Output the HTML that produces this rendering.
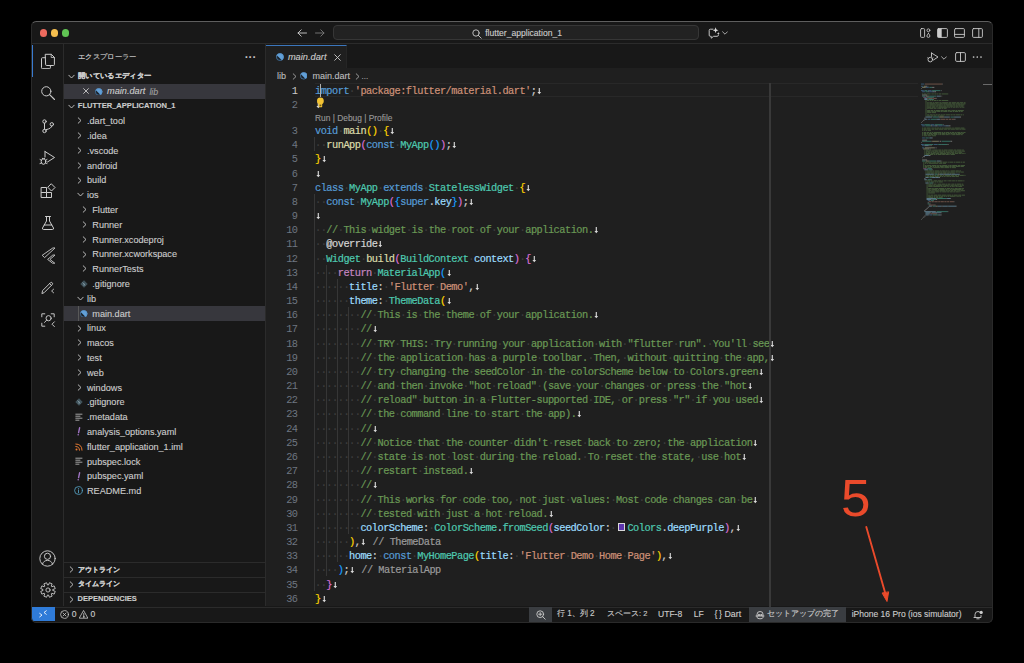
<!DOCTYPE html><html><head><meta charset="utf-8"><style>
*{margin:0;padding:0;box-sizing:border-box}
html,body{width:1024px;height:663px;background:#000;overflow:hidden}
body{position:relative;font-family:"Liberation Sans",sans-serif;color:#cccccc}
#win{position:absolute;left:31px;top:21px;width:961.5px;height:601px;background:#181818;border-radius:5px;overflow:hidden}
#winb{position:absolute;left:30.5px;top:20.5px;width:962.5px;height:602px;border-radius:5.5px;border:1px solid #2a2a2a;border-top-color:#5e5e5e;pointer-events:none;z-index:5}
.a{position:absolute}
.cl{position:absolute;left:284.0px;height:14.17px;line-height:14.17px;font-family:"Liberation Mono",monospace;font-size:10.3px;letter-spacing:-0.5009px;white-space:pre;margin-top:1.1px;-webkit-text-stroke:0.2px}
.cl i{font-style:normal}
.d{color:#3e3e3e}
.eol{display:inline-block;width:5.680px;height:14.17px;vertical-align:top}
.sw{display:inline-block;width:11.36px;height:14.17px;position:relative;vertical-align:top}
.sw:after{content:"";position:absolute;left:1.8px;top:2.1px;width:7.6px;height:7.6px;box-sizing:border-box;background:#5d35b0;border:0.8px solid #d8d8d8}
.ln{position:absolute;left:235px;width:31.5px;text-align:right;height:14.17px;line-height:14.17px;font-family:"Liberation Mono",monospace;font-size:10.3px;letter-spacing:-0.5009px;color:#6e7681;margin-top:1.1px}
.ln.cur{color:#cccccc}
.ig{position:absolute;width:1px;background:#363636}
.ui{position:absolute;font-size:9px;white-space:nowrap;line-height:14px;-webkit-text-stroke:0.12px}
</style></head><body>
<div id="win">
<div class="a" style="left:0;top:0;width:962px;height:23.3px;background:#181818;border-bottom:1px solid #2b2b2b"></div>
<div class="a" style="left:8.8px;top:8.4px;width:7.2px;height:7.2px;border-radius:50%;background:#ed6a5e"></div>
<div class="a" style="left:19.95px;top:8.4px;width:7.2px;height:7.2px;border-radius:50%;background:#f5bf4f"></div>
<div class="a" style="left:31.1px;top:8.4px;width:7.2px;height:7.2px;border-radius:50%;background:#61c554"></div>
<div class="a" style="left:235px;top:23.3px;width:727px;height:562.2px;background:#1f1f1f"></div>
<div class="a" style="left:235px;top:23.3px;width:727px;height:23.5px;background:#181818"></div>
<div class="a" style="left:235px;top:24px;width:81px;height:22.799999999999997px;background:#1f1f1f;border-top:1px solid #3b76bd;border-right:1px solid #252525"></div>
<div class="a" style="left:32.3px;top:23.3px;width:1px;height:562.2px;background:#2b2b2b"></div>
<div class="a" style="left:234.3px;top:23.3px;width:1px;height:562.2px;background:#2b2b2b"></div>
<div class="a" style="left:0;top:585.5px;width:962px;height:15.5px;background:#181818;border-top:1px solid #2b2b2b"></div>
<div class="ig" style="left:283.40px;top:116.17px;height:14.17px"></div><div class="ig" style="left:283.40px;top:172.85px;height:396.76px"></div><div class="ig" style="left:294.76px;top:243.70px;height:311.74px"></div><div class="ig" style="left:306.12px;top:257.87px;height:283.40px"></div><div class="ig" style="left:317.48px;top:286.21px;height:226.72px"></div>
<div class="cl" style="top:61.60px"><span style="color:#569cd6">import</span><i class="d">·</i><span style="color:#ce9178">&#x27;package:flutter/material.dart&#x27;</span><span style="color:#cccccc">;</span><svg class="eol" width="5.680" height="14.17" viewBox="0 0 5.680 14.17"><path d="M3.3 4.0 V8.6" stroke="#d8d8d8" stroke-width="1.15"/><path d="M1.45 7.9 H5.15 L3.3 10.3 Z" fill="#d8d8d8"/></svg></div><div class="ln cur" style="top:61.60px">1</div><div class="cl" style="top:75.90px"><svg class="eol" width="5.680" height="14.17" viewBox="0 0 5.680 14.17"><path d="M3.3 4.0 V8.6" stroke="#d8d8d8" stroke-width="1.15"/><path d="M1.45 7.9 H5.15 L3.3 10.3 Z" fill="#d8d8d8"/></svg></div><div class="ln" style="top:75.90px">2</div><div class="cl" style="top:102.00px"><span style="color:#569cd6">void</span><i class="d">·</i><span style="color:#dcdcaa">main</span><span style="color:#ffd700">()</span><i class="d">·</i><span style="color:#ffd700">{</span><svg class="eol" width="5.680" height="14.17" viewBox="0 0 5.680 14.17"><path d="M3.3 4.0 V8.6" stroke="#d8d8d8" stroke-width="1.15"/><path d="M1.45 7.9 H5.15 L3.3 10.3 Z" fill="#d8d8d8"/></svg></div><div class="ln" style="top:102.00px">3</div><div class="cl" style="top:116.17px"><i class="d">··</i><span style="color:#dcdcaa">runApp</span><span style="color:#da70d6">(</span><span style="color:#569cd6">const</span><i class="d">·</i><span style="color:#4ec9b0">MyApp</span><span style="color:#179fff">()</span><span style="color:#da70d6">)</span><span style="color:#cccccc">;</span><svg class="eol" width="5.680" height="14.17" viewBox="0 0 5.680 14.17"><path d="M3.3 4.0 V8.6" stroke="#d8d8d8" stroke-width="1.15"/><path d="M1.45 7.9 H5.15 L3.3 10.3 Z" fill="#d8d8d8"/></svg></div><div class="ln" style="top:116.17px">4</div><div class="cl" style="top:130.34px"><span style="color:#ffd700">}</span><svg class="eol" width="5.680" height="14.17" viewBox="0 0 5.680 14.17"><path d="M3.3 4.0 V8.6" stroke="#d8d8d8" stroke-width="1.15"/><path d="M1.45 7.9 H5.15 L3.3 10.3 Z" fill="#d8d8d8"/></svg></div><div class="ln" style="top:130.34px">5</div><div class="cl" style="top:144.51px"><svg class="eol" width="5.680" height="14.17" viewBox="0 0 5.680 14.17"><path d="M3.3 4.0 V8.6" stroke="#d8d8d8" stroke-width="1.15"/><path d="M1.45 7.9 H5.15 L3.3 10.3 Z" fill="#d8d8d8"/></svg></div><div class="ln" style="top:144.51px">6</div><div class="cl" style="top:158.68px"><span style="color:#569cd6">class</span><i class="d">·</i><span style="color:#4ec9b0">MyApp</span><i class="d">·</i><span style="color:#569cd6">extends</span><i class="d">·</i><span style="color:#4ec9b0">StatelessWidget</span><i class="d">·</i><span style="color:#ffd700">{</span><svg class="eol" width="5.680" height="14.17" viewBox="0 0 5.680 14.17"><path d="M3.3 4.0 V8.6" stroke="#d8d8d8" stroke-width="1.15"/><path d="M1.45 7.9 H5.15 L3.3 10.3 Z" fill="#d8d8d8"/></svg></div><div class="ln" style="top:158.68px">7</div><div class="cl" style="top:172.85px"><i class="d">··</i><span style="color:#569cd6">const</span><i class="d">·</i><span style="color:#4ec9b0">MyApp</span><span style="color:#da70d6">(</span><span style="color:#179fff">{</span><span style="color:#569cd6">super</span><span style="color:#cccccc">.</span><span style="color:#9cdcfe">key</span><span style="color:#179fff">}</span><span style="color:#da70d6">)</span><span style="color:#cccccc">;</span><svg class="eol" width="5.680" height="14.17" viewBox="0 0 5.680 14.17"><path d="M3.3 4.0 V8.6" stroke="#d8d8d8" stroke-width="1.15"/><path d="M1.45 7.9 H5.15 L3.3 10.3 Z" fill="#d8d8d8"/></svg></div><div class="ln" style="top:172.85px">8</div><div class="cl" style="top:187.02px"><svg class="eol" width="5.680" height="14.17" viewBox="0 0 5.680 14.17"><path d="M3.3 4.0 V8.6" stroke="#d8d8d8" stroke-width="1.15"/><path d="M1.45 7.9 H5.15 L3.3 10.3 Z" fill="#d8d8d8"/></svg></div><div class="ln" style="top:187.02px">9</div><div class="cl" style="top:201.19px"><i class="d">··</i><span style="color:#6a9955">//</span><i class="d">·</i><span style="color:#6a9955">This</span><i class="d">·</i><span style="color:#6a9955">widget</span><i class="d">·</i><span style="color:#6a9955">is</span><i class="d">·</i><span style="color:#6a9955">the</span><i class="d">·</i><span style="color:#6a9955">root</span><i class="d">·</i><span style="color:#6a9955">of</span><i class="d">·</i><span style="color:#6a9955">your</span><i class="d">·</i><span style="color:#6a9955">application.</span><svg class="eol" width="5.680" height="14.17" viewBox="0 0 5.680 14.17"><path d="M3.3 4.0 V8.6" stroke="#d8d8d8" stroke-width="1.15"/><path d="M1.45 7.9 H5.15 L3.3 10.3 Z" fill="#d8d8d8"/></svg></div><div class="ln" style="top:201.19px">10</div><div class="cl" style="top:215.36px"><i class="d">··</i><span style="color:#d4d4d4">@override</span><svg class="eol" width="5.680" height="14.17" viewBox="0 0 5.680 14.17"><path d="M3.3 4.0 V8.6" stroke="#d8d8d8" stroke-width="1.15"/><path d="M1.45 7.9 H5.15 L3.3 10.3 Z" fill="#d8d8d8"/></svg></div><div class="ln" style="top:215.36px">11</div><div class="cl" style="top:229.53px"><i class="d">··</i><span style="color:#4ec9b0">Widget</span><i class="d">·</i><span style="color:#dcdcaa">build</span><span style="color:#da70d6">(</span><span style="color:#4ec9b0">BuildContext</span><i class="d">·</i><span style="color:#9cdcfe">context</span><span style="color:#da70d6">)</span><i class="d">·</i><span style="color:#da70d6">{</span><svg class="eol" width="5.680" height="14.17" viewBox="0 0 5.680 14.17"><path d="M3.3 4.0 V8.6" stroke="#d8d8d8" stroke-width="1.15"/><path d="M1.45 7.9 H5.15 L3.3 10.3 Z" fill="#d8d8d8"/></svg></div><div class="ln" style="top:229.53px">12</div><div class="cl" style="top:243.70px"><i class="d">····</i><span style="color:#c586c0">return</span><i class="d">·</i><span style="color:#4ec9b0">MaterialApp</span><span style="color:#179fff">(</span><svg class="eol" width="5.680" height="14.17" viewBox="0 0 5.680 14.17"><path d="M3.3 4.0 V8.6" stroke="#d8d8d8" stroke-width="1.15"/><path d="M1.45 7.9 H5.15 L3.3 10.3 Z" fill="#d8d8d8"/></svg></div><div class="ln" style="top:243.70px">13</div><div class="cl" style="top:257.87px"><i class="d">······</i><span style="color:#9cdcfe">title</span><span style="color:#cccccc">:</span><i class="d">·</i><span style="color:#ce9178">&#x27;Flutter</span><i class="d">·</i><span style="color:#ce9178">Demo&#x27;</span><span style="color:#cccccc">,</span><svg class="eol" width="5.680" height="14.17" viewBox="0 0 5.680 14.17"><path d="M3.3 4.0 V8.6" stroke="#d8d8d8" stroke-width="1.15"/><path d="M1.45 7.9 H5.15 L3.3 10.3 Z" fill="#d8d8d8"/></svg></div><div class="ln" style="top:257.87px">14</div><div class="cl" style="top:272.04px"><i class="d">······</i><span style="color:#9cdcfe">theme</span><span style="color:#cccccc">:</span><i class="d">·</i><span style="color:#4ec9b0">ThemeData</span><span style="color:#ffd700">(</span><svg class="eol" width="5.680" height="14.17" viewBox="0 0 5.680 14.17"><path d="M3.3 4.0 V8.6" stroke="#d8d8d8" stroke-width="1.15"/><path d="M1.45 7.9 H5.15 L3.3 10.3 Z" fill="#d8d8d8"/></svg></div><div class="ln" style="top:272.04px">15</div><div class="cl" style="top:286.21px"><i class="d">········</i><span style="color:#6a9955">//</span><i class="d">·</i><span style="color:#6a9955">This</span><i class="d">·</i><span style="color:#6a9955">is</span><i class="d">·</i><span style="color:#6a9955">the</span><i class="d">·</i><span style="color:#6a9955">theme</span><i class="d">·</i><span style="color:#6a9955">of</span><i class="d">·</i><span style="color:#6a9955">your</span><i class="d">·</i><span style="color:#6a9955">application.</span><svg class="eol" width="5.680" height="14.17" viewBox="0 0 5.680 14.17"><path d="M3.3 4.0 V8.6" stroke="#d8d8d8" stroke-width="1.15"/><path d="M1.45 7.9 H5.15 L3.3 10.3 Z" fill="#d8d8d8"/></svg></div><div class="ln" style="top:286.21px">16</div><div class="cl" style="top:300.38px"><i class="d">········</i><span style="color:#6a9955">//</span><svg class="eol" width="5.680" height="14.17" viewBox="0 0 5.680 14.17"><path d="M3.3 4.0 V8.6" stroke="#d8d8d8" stroke-width="1.15"/><path d="M1.45 7.9 H5.15 L3.3 10.3 Z" fill="#d8d8d8"/></svg></div><div class="ln" style="top:300.38px">17</div><div class="cl" style="top:314.55px"><i class="d">········</i><span style="color:#6a9955">//</span><i class="d">·</i><span style="color:#6a9955">TRY</span><i class="d">·</i><span style="color:#6a9955">THIS:</span><i class="d">·</i><span style="color:#6a9955">Try</span><i class="d">·</i><span style="color:#6a9955">running</span><i class="d">·</i><span style="color:#6a9955">your</span><i class="d">·</i><span style="color:#6a9955">application</span><i class="d">·</i><span style="color:#6a9955">with</span><i class="d">·</i><span style="color:#6a9955">&quot;flutter</span><i class="d">·</i><span style="color:#6a9955">run&quot;.</span><i class="d">·</i><span style="color:#6a9955">You&#x27;ll</span><i class="d">·</i><span style="color:#6a9955">see</span><svg class="eol" width="5.680" height="14.17" viewBox="0 0 5.680 14.17"><path d="M3.3 4.0 V8.6" stroke="#d8d8d8" stroke-width="1.15"/><path d="M1.45 7.9 H5.15 L3.3 10.3 Z" fill="#d8d8d8"/></svg></div><div class="ln" style="top:314.55px">18</div><div class="cl" style="top:328.72px"><i class="d">········</i><span style="color:#6a9955">//</span><i class="d">·</i><span style="color:#6a9955">the</span><i class="d">·</i><span style="color:#6a9955">application</span><i class="d">·</i><span style="color:#6a9955">has</span><i class="d">·</i><span style="color:#6a9955">a</span><i class="d">·</i><span style="color:#6a9955">purple</span><i class="d">·</i><span style="color:#6a9955">toolbar.</span><i class="d">·</i><span style="color:#6a9955">Then,</span><i class="d">·</i><span style="color:#6a9955">without</span><i class="d">·</i><span style="color:#6a9955">quitting</span><i class="d">·</i><span style="color:#6a9955">the</span><i class="d">·</i><span style="color:#6a9955">app,</span><svg class="eol" width="5.680" height="14.17" viewBox="0 0 5.680 14.17"><path d="M3.3 4.0 V8.6" stroke="#d8d8d8" stroke-width="1.15"/><path d="M1.45 7.9 H5.15 L3.3 10.3 Z" fill="#d8d8d8"/></svg></div><div class="ln" style="top:328.72px">19</div><div class="cl" style="top:342.89px"><i class="d">········</i><span style="color:#6a9955">//</span><i class="d">·</i><span style="color:#6a9955">try</span><i class="d">·</i><span style="color:#6a9955">changing</span><i class="d">·</i><span style="color:#6a9955">the</span><i class="d">·</i><span style="color:#6a9955">seedColor</span><i class="d">·</i><span style="color:#6a9955">in</span><i class="d">·</i><span style="color:#6a9955">the</span><i class="d">·</i><span style="color:#6a9955">colorScheme</span><i class="d">·</i><span style="color:#6a9955">below</span><i class="d">·</i><span style="color:#6a9955">to</span><i class="d">·</i><span style="color:#6a9955">Colors.green</span><svg class="eol" width="5.680" height="14.17" viewBox="0 0 5.680 14.17"><path d="M3.3 4.0 V8.6" stroke="#d8d8d8" stroke-width="1.15"/><path d="M1.45 7.9 H5.15 L3.3 10.3 Z" fill="#d8d8d8"/></svg></div><div class="ln" style="top:342.89px">20</div><div class="cl" style="top:357.06px"><i class="d">········</i><span style="color:#6a9955">//</span><i class="d">·</i><span style="color:#6a9955">and</span><i class="d">·</i><span style="color:#6a9955">then</span><i class="d">·</i><span style="color:#6a9955">invoke</span><i class="d">·</i><span style="color:#6a9955">&quot;hot</span><i class="d">·</i><span style="color:#6a9955">reload&quot;</span><i class="d">·</i><span style="color:#6a9955">(save</span><i class="d">·</i><span style="color:#6a9955">your</span><i class="d">·</i><span style="color:#6a9955">changes</span><i class="d">·</i><span style="color:#6a9955">or</span><i class="d">·</i><span style="color:#6a9955">press</span><i class="d">·</i><span style="color:#6a9955">the</span><i class="d">·</i><span style="color:#6a9955">&quot;hot</span><svg class="eol" width="5.680" height="14.17" viewBox="0 0 5.680 14.17"><path d="M3.3 4.0 V8.6" stroke="#d8d8d8" stroke-width="1.15"/><path d="M1.45 7.9 H5.15 L3.3 10.3 Z" fill="#d8d8d8"/></svg></div><div class="ln" style="top:357.06px">21</div><div class="cl" style="top:371.23px"><i class="d">········</i><span style="color:#6a9955">//</span><i class="d">·</i><span style="color:#6a9955">reload&quot;</span><i class="d">·</i><span style="color:#6a9955">button</span><i class="d">·</i><span style="color:#6a9955">in</span><i class="d">·</i><span style="color:#6a9955">a</span><i class="d">·</i><span style="color:#6a9955">Flutter-supported</span><i class="d">·</i><span style="color:#6a9955">IDE,</span><i class="d">·</i><span style="color:#6a9955">or</span><i class="d">·</i><span style="color:#6a9955">press</span><i class="d">·</i><span style="color:#6a9955">&quot;r&quot;</span><i class="d">·</i><span style="color:#6a9955">if</span><i class="d">·</i><span style="color:#6a9955">you</span><i class="d">·</i><span style="color:#6a9955">used</span><svg class="eol" width="5.680" height="14.17" viewBox="0 0 5.680 14.17"><path d="M3.3 4.0 V8.6" stroke="#d8d8d8" stroke-width="1.15"/><path d="M1.45 7.9 H5.15 L3.3 10.3 Z" fill="#d8d8d8"/></svg></div><div class="ln" style="top:371.23px">22</div><div class="cl" style="top:385.40px"><i class="d">········</i><span style="color:#6a9955">//</span><i class="d">·</i><span style="color:#6a9955">the</span><i class="d">·</i><span style="color:#6a9955">command</span><i class="d">·</i><span style="color:#6a9955">line</span><i class="d">·</i><span style="color:#6a9955">to</span><i class="d">·</i><span style="color:#6a9955">start</span><i class="d">·</i><span style="color:#6a9955">the</span><i class="d">·</i><span style="color:#6a9955">app).</span><svg class="eol" width="5.680" height="14.17" viewBox="0 0 5.680 14.17"><path d="M3.3 4.0 V8.6" stroke="#d8d8d8" stroke-width="1.15"/><path d="M1.45 7.9 H5.15 L3.3 10.3 Z" fill="#d8d8d8"/></svg></div><div class="ln" style="top:385.40px">23</div><div class="cl" style="top:399.57px"><i class="d">········</i><span style="color:#6a9955">//</span><svg class="eol" width="5.680" height="14.17" viewBox="0 0 5.680 14.17"><path d="M3.3 4.0 V8.6" stroke="#d8d8d8" stroke-width="1.15"/><path d="M1.45 7.9 H5.15 L3.3 10.3 Z" fill="#d8d8d8"/></svg></div><div class="ln" style="top:399.57px">24</div><div class="cl" style="top:413.74px"><i class="d">········</i><span style="color:#6a9955">//</span><i class="d">·</i><span style="color:#6a9955">Notice</span><i class="d">·</i><span style="color:#6a9955">that</span><i class="d">·</i><span style="color:#6a9955">the</span><i class="d">·</i><span style="color:#6a9955">counter</span><i class="d">·</i><span style="color:#6a9955">didn&#x27;t</span><i class="d">·</i><span style="color:#6a9955">reset</span><i class="d">·</i><span style="color:#6a9955">back</span><i class="d">·</i><span style="color:#6a9955">to</span><i class="d">·</i><span style="color:#6a9955">zero;</span><i class="d">·</i><span style="color:#6a9955">the</span><i class="d">·</i><span style="color:#6a9955">application</span><svg class="eol" width="5.680" height="14.17" viewBox="0 0 5.680 14.17"><path d="M3.3 4.0 V8.6" stroke="#d8d8d8" stroke-width="1.15"/><path d="M1.45 7.9 H5.15 L3.3 10.3 Z" fill="#d8d8d8"/></svg></div><div class="ln" style="top:413.74px">25</div><div class="cl" style="top:427.91px"><i class="d">········</i><span style="color:#6a9955">//</span><i class="d">·</i><span style="color:#6a9955">state</span><i class="d">·</i><span style="color:#6a9955">is</span><i class="d">·</i><span style="color:#6a9955">not</span><i class="d">·</i><span style="color:#6a9955">lost</span><i class="d">·</i><span style="color:#6a9955">during</span><i class="d">·</i><span style="color:#6a9955">the</span><i class="d">·</i><span style="color:#6a9955">reload.</span><i class="d">·</i><span style="color:#6a9955">To</span><i class="d">·</i><span style="color:#6a9955">reset</span><i class="d">·</i><span style="color:#6a9955">the</span><i class="d">·</i><span style="color:#6a9955">state,</span><i class="d">·</i><span style="color:#6a9955">use</span><i class="d">·</i><span style="color:#6a9955">hot</span><svg class="eol" width="5.680" height="14.17" viewBox="0 0 5.680 14.17"><path d="M3.3 4.0 V8.6" stroke="#d8d8d8" stroke-width="1.15"/><path d="M1.45 7.9 H5.15 L3.3 10.3 Z" fill="#d8d8d8"/></svg></div><div class="ln" style="top:427.91px">26</div><div class="cl" style="top:442.08px"><i class="d">········</i><span style="color:#6a9955">//</span><i class="d">·</i><span style="color:#6a9955">restart</span><i class="d">·</i><span style="color:#6a9955">instead.</span><svg class="eol" width="5.680" height="14.17" viewBox="0 0 5.680 14.17"><path d="M3.3 4.0 V8.6" stroke="#d8d8d8" stroke-width="1.15"/><path d="M1.45 7.9 H5.15 L3.3 10.3 Z" fill="#d8d8d8"/></svg></div><div class="ln" style="top:442.08px">27</div><div class="cl" style="top:456.25px"><i class="d">········</i><span style="color:#6a9955">//</span><svg class="eol" width="5.680" height="14.17" viewBox="0 0 5.680 14.17"><path d="M3.3 4.0 V8.6" stroke="#d8d8d8" stroke-width="1.15"/><path d="M1.45 7.9 H5.15 L3.3 10.3 Z" fill="#d8d8d8"/></svg></div><div class="ln" style="top:456.25px">28</div><div class="cl" style="top:470.42px"><i class="d">········</i><span style="color:#6a9955">//</span><i class="d">·</i><span style="color:#6a9955">This</span><i class="d">·</i><span style="color:#6a9955">works</span><i class="d">·</i><span style="color:#6a9955">for</span><i class="d">·</i><span style="color:#6a9955">code</span><i class="d">·</i><span style="color:#6a9955">too,</span><i class="d">·</i><span style="color:#6a9955">not</span><i class="d">·</i><span style="color:#6a9955">just</span><i class="d">·</i><span style="color:#6a9955">values:</span><i class="d">·</i><span style="color:#6a9955">Most</span><i class="d">·</i><span style="color:#6a9955">code</span><i class="d">·</i><span style="color:#6a9955">changes</span><i class="d">·</i><span style="color:#6a9955">can</span><i class="d">·</i><span style="color:#6a9955">be</span><svg class="eol" width="5.680" height="14.17" viewBox="0 0 5.680 14.17"><path d="M3.3 4.0 V8.6" stroke="#d8d8d8" stroke-width="1.15"/><path d="M1.45 7.9 H5.15 L3.3 10.3 Z" fill="#d8d8d8"/></svg></div><div class="ln" style="top:470.42px">29</div><div class="cl" style="top:484.59px"><i class="d">········</i><span style="color:#6a9955">//</span><i class="d">·</i><span style="color:#6a9955">tested</span><i class="d">·</i><span style="color:#6a9955">with</span><i class="d">·</i><span style="color:#6a9955">just</span><i class="d">·</i><span style="color:#6a9955">a</span><i class="d">·</i><span style="color:#6a9955">hot</span><i class="d">·</i><span style="color:#6a9955">reload.</span><svg class="eol" width="5.680" height="14.17" viewBox="0 0 5.680 14.17"><path d="M3.3 4.0 V8.6" stroke="#d8d8d8" stroke-width="1.15"/><path d="M1.45 7.9 H5.15 L3.3 10.3 Z" fill="#d8d8d8"/></svg></div><div class="ln" style="top:484.59px">30</div><div class="cl" style="top:498.76px"><i class="d">········</i><span style="color:#9cdcfe">colorScheme</span><span style="color:#cccccc">:</span><i class="d">·</i><span style="color:#4ec9b0">ColorScheme</span><span style="color:#cccccc">.</span><span style="color:#4ec9b0">fromSeed</span><span style="color:#da70d6">(</span><span style="color:#9cdcfe">seedColor</span><span style="color:#cccccc">:</span><i class="d">·</i><b class="sw"></b><span style="color:#4ec9b0">Colors</span><span style="color:#cccccc">.</span><span style="color:#9cdcfe">deepPurple</span><span style="color:#da70d6">)</span><span style="color:#cccccc">,</span><svg class="eol" width="5.680" height="14.17" viewBox="0 0 5.680 14.17"><path d="M3.3 4.0 V8.6" stroke="#d8d8d8" stroke-width="1.15"/><path d="M1.45 7.9 H5.15 L3.3 10.3 Z" fill="#d8d8d8"/></svg></div><div class="ln" style="top:498.76px">31</div><div class="cl" style="top:512.93px"><i class="d">······</i><span style="color:#ffd700">)</span><span style="color:#cccccc">,</span><svg class="eol" width="5.680" height="14.17" viewBox="0 0 5.680 14.17"><path d="M3.3 4.0 V8.6" stroke="#d8d8d8" stroke-width="1.15"/><path d="M1.45 7.9 H5.15 L3.3 10.3 Z" fill="#d8d8d8"/></svg><span style="color:#9a9a9a;margin-left:0.8px"> // ThemeData</span></div><div class="ln" style="top:512.93px">32</div><div class="cl" style="top:527.10px"><i class="d">······</i><span style="color:#9cdcfe">home</span><span style="color:#cccccc">:</span><i class="d">·</i><span style="color:#569cd6">const</span><i class="d">·</i><span style="color:#4ec9b0">MyHomePage</span><span style="color:#ffd700">(</span><span style="color:#9cdcfe">title</span><span style="color:#cccccc">:</span><i class="d">·</i><span style="color:#ce9178">&#x27;Flutter</span><i class="d">·</i><span style="color:#ce9178">Demo</span><i class="d">·</i><span style="color:#ce9178">Home</span><i class="d">·</i><span style="color:#ce9178">Page&#x27;</span><span style="color:#ffd700">)</span><span style="color:#cccccc">,</span><svg class="eol" width="5.680" height="14.17" viewBox="0 0 5.680 14.17"><path d="M3.3 4.0 V8.6" stroke="#d8d8d8" stroke-width="1.15"/><path d="M1.45 7.9 H5.15 L3.3 10.3 Z" fill="#d8d8d8"/></svg></div><div class="ln" style="top:527.10px">33</div><div class="cl" style="top:541.27px"><i class="d">····</i><span style="color:#179fff">)</span><span style="color:#cccccc">;</span><svg class="eol" width="5.680" height="14.17" viewBox="0 0 5.680 14.17"><path d="M3.3 4.0 V8.6" stroke="#d8d8d8" stroke-width="1.15"/><path d="M1.45 7.9 H5.15 L3.3 10.3 Z" fill="#d8d8d8"/></svg><span style="color:#9a9a9a;margin-left:0.8px"> // MaterialApp</span></div><div class="ln" style="top:541.27px">34</div><div class="cl" style="top:555.44px"><i class="d">··</i><span style="color:#da70d6">}</span><svg class="eol" width="5.680" height="14.17" viewBox="0 0 5.680 14.17"><path d="M3.3 4.0 V8.6" stroke="#d8d8d8" stroke-width="1.15"/><path d="M1.45 7.9 H5.15 L3.3 10.3 Z" fill="#d8d8d8"/></svg></div><div class="ln" style="top:555.44px">35</div><div class="cl" style="top:569.61px"><span style="color:#ffd700">}</span><svg class="eol" width="5.680" height="14.17" viewBox="0 0 5.680 14.17"><path d="M3.3 4.0 V8.6" stroke="#d8d8d8" stroke-width="1.15"/><path d="M1.45 7.9 H5.15 L3.3 10.3 Z" fill="#d8d8d8"/></svg></div><div class="ln" style="top:569.61px">36</div>
<div class="a" style="left:0;top:24px;width:1.8px;height:32px;background:#3a7bd0"></div>
<svg class="a" style="left:8.50px;top:32.00px;" width="16" height="16" viewBox="0 0 16 16" fill="none" stroke="#cccccc" stroke-width="1" stroke-linecap="round" stroke-linejoin="round"><path d="M5.6 1.3 H11.3 L14.4 4.4 V11.6 Q14.4 12.5 13.5 12.5 H6.5 Q5.6 12.5 5.6 11.6 Z" stroke-width="1"/><path d="M11.2 1.3 V4.5 H14.4" stroke-width="0.8"/><path d="M5.6 4.7 H2.5 Q1.5 4.7 1.5 5.7 V14.7 Q1.5 15.7 2.5 15.7 H9.4 Q10.4 15.7 10.4 14.7 V12.5" stroke-width="1"/></svg>
<svg class="a" style="left:8.50px;top:63.50px;" width="16" height="16" viewBox="0 0 16 16" fill="none" stroke="#cccccc" stroke-width="1" stroke-linecap="round" stroke-linejoin="round"><circle cx="6.3" cy="6.3" r="4.6"/><path d="M9.6 9.6 L14.5 14.5" stroke-width="1.1"/></svg>
<svg class="a" style="left:8.50px;top:97.00px;" width="16" height="16" viewBox="0 0 16 16" fill="none" stroke="#cccccc" stroke-width="1" stroke-linecap="round" stroke-linejoin="round"><circle cx="4.5" cy="3.5" r="1.7"/><circle cx="4.5" cy="13" r="1.7"/><circle cx="11.8" cy="6.3" r="1.7"/><path d="M4.5 5.2 V11.3"/><path d="M11.8 8 Q11.8 10.5 6 11.7"/></svg>
<svg class="a" style="left:8.00px;top:128.60px;" width="17" height="16" viewBox="0 0 17 16" fill="none" stroke="#cccccc" stroke-width="1" stroke-linecap="round" stroke-linejoin="round"><path d="M6 1.5 L15.5 7.5 L8.5 12" /><path d="M6 1.5 V7"/><ellipse cx="4.5" cy="11.5" rx="2.3" ry="2.8"/><path d="M1 9.5 L2.3 10.3 M1 13.5 L2.3 13 M8 9.5 L6.7 10.3 M8 13.5 L6.7 13 M3.3 8.3 L4.5 9 L5.7 8.3"/></svg>
<svg class="a" style="left:8.50px;top:161.50px;" width="16" height="16" viewBox="0 0 16 16" fill="none" stroke="#cccccc" stroke-width="1" stroke-linecap="round" stroke-linejoin="round"><path d="M1.5 4.5 H6.5 V9.5 H11.5 V14.5 H1.5 Z M1.5 9.5 H6.5 V14.5"/><path d="M11.5 1 L15 4.5 L11.5 8 L8 4.5 Z"/></svg>
<svg class="a" style="left:9.50px;top:193.70px;" width="14" height="16" viewBox="0 0 14 16" fill="none" stroke="#cccccc" stroke-width="1" stroke-linecap="round" stroke-linejoin="round"><path d="M4.5 1.5 H9.5 M5.5 1.5 V6 L1.5 13 Q1.2 14.5 2.5 14.5 H11.5 Q12.8 14.5 12.5 13 L8.5 6 V1.5"/><path d="M3.2 10 H10.8"/></svg>
<svg class="a" style="left:9.50px;top:225.90px;" width="14" height="17" viewBox="0 0 14 17" fill="none" stroke="#cccccc" stroke-width="1" stroke-linecap="round" stroke-linejoin="round"><path d="M11.5 1.2 L1.2 8.3 L3.6 10.6 L13.8 1.2 Z" stroke-width="0.9"/><path d="M11.5 8.3 L6.6 12.4 L11.5 16.2 H13.8 L8.9 12.4 L13.8 8.3 Z" stroke-width="0.9"/></svg>
<svg class="a" style="left:9.00px;top:258.50px;" width="15" height="15" viewBox="0 0 15 15" fill="none" stroke="#cccccc" stroke-width="1" stroke-linecap="round" stroke-linejoin="round"><path d="M2 13.2 L2.6 10.6 L10.4 2.8 Q11.3 1.9 12.2 2.8 Q13.1 3.7 12.2 4.6 L4.4 12.4 Z" stroke-width="0.95"/><path d="M9.6 3.6 L11.4 5.4" stroke-width="0.9"/><path d="M13.6 9.2 L11.6 11 L13.6 12.8" stroke-width="0.9"/></svg>
<svg class="a" style="left:8.50px;top:291.00px;" width="16" height="16" viewBox="0 0 16 16" fill="none" stroke="#cccccc" stroke-width="1" stroke-linecap="round" stroke-linejoin="round"><path d="M1.8 4.8 V1.8 H4.8 M11.2 1.8 H14.2 V4.8 M1.8 11.2 V14.2 H4.8" stroke-width="0.95"/><circle cx="8.6" cy="6.2" r="2.6" stroke-width="0.95"/><path d="M6.7 8.1 L4.6 10.4" stroke-width="0.95"/><path d="M14.4 9.8 L12 12.2 L14.4 14.6" stroke-width="0.95"/></svg>
<svg class="a" style="left:8.00px;top:528.70px;" width="17" height="17" viewBox="0 0 17 17" fill="none" stroke="#cccccc" stroke-width="1" stroke-linecap="round" stroke-linejoin="round"><circle cx="8.5" cy="8.5" r="7.7" stroke-width="0.95"/><circle cx="8.5" cy="6.3" r="3.1" stroke-width="0.95"/><path d="M3.4 14.2 Q4.6 10.4 8.5 10.4 Q12.4 10.4 13.6 14.2" stroke-width="0.95"/></svg>
<svg class="a" style="left:8.50px;top:561.20px;" width="16" height="16" viewBox="0 0 16 16" fill="none" stroke="#cccccc" stroke-width="1" stroke-linecap="round" stroke-linejoin="round"><path d="M12.98 8.46 L15.26 9.42 L14.14 12.13 L11.85 11.19 L11.19 11.85 L12.13 14.14 L9.42 15.26 L8.46 12.98 L7.54 12.98 L6.58 15.26 L3.87 14.14 L4.81 11.85 L4.15 11.19 L1.86 12.13 L0.74 9.42 L3.02 8.46 L3.02 7.54 L0.74 6.58 L1.86 3.87 L4.15 4.81 L4.81 4.15 L3.87 1.86 L6.58 0.74 L7.54 3.02 L8.46 3.02 L9.42 0.74 L12.13 1.86 L11.19 4.15 L11.85 4.81 L14.14 3.87 L15.26 6.58 L12.98 7.54 Z" stroke-width="0.9"/><circle cx="8" cy="8" r="2.1" stroke-width="0.9"/></svg>
<div class="ui" style="left:46.90px;top:28.90px;height:14px;line-height:14px;font-size:7px;color:#cccccc;font-weight:normal;font-style:normal;transform:scaleX(1.05);transform-origin:0 0">エクスプローラー</div>
<div class="ui" style="left:214.00px;top:29.50px;height:14px;line-height:14px;font-size:10px;color:#cccccc;font-weight:normal;font-style:normal;letter-spacing:0.5px;font-weight:bold">···</div>
<svg class="a" style="left:36.70px;top:52.80px;" width="7" height="5" viewBox="0 0 7 5" fill="none" stroke="#cccccc" stroke-width="1" stroke-linecap="round" stroke-linejoin="round"><path d="M0.8 1.2 L3.5 4 L6.2 1.2" stroke="#cccccc" stroke-width="0.9"/></svg>
<div class="ui" style="left:46.90px;top:48.30px;height:14px;line-height:14px;font-size:7px;color:#cccccc;font-weight:bold;font-style:normal;transform:scaleX(1.05);transform-origin:0 0">開いているエディター</div>
<div class="a" style="left:33px;top:62.9px;width:201.3px;height:14.78px;background:#37373d"></div>
<svg class="a" style="left:52.00px;top:67.30px;" width="6" height="6" viewBox="0 0 6 6" fill="none" stroke="#cccccc" stroke-width="1" stroke-linecap="round" stroke-linejoin="round"><path d="M0.6 0.6 L5.4 5.4 M5.4 0.6 L0.6 5.4" stroke-width="0.9"/></svg>
<svg class="a" style="left:64.00px;top:66.50px;" width="7.6" height="7.6" viewBox="0 0 7.6 7.6" fill="none" stroke="#cccccc" stroke-width="1" stroke-linecap="round" stroke-linejoin="round"><g transform="scale(0.95)"><circle cx="4" cy="4" r="3.7" fill="#62a0d8" stroke="none"/><path d="M1.0 2.4 L5.9 7.3 A3.5 3.5 0 0 1 1.0 2.4 Z" fill="#1a2129" stroke="none"/><circle cx="4" cy="4" r="3.5" fill="none" stroke="#5590c8" stroke-width="0.6"/></g></svg>
<div class="ui" style="left:76.00px;top:63.30px;height:14px;line-height:14px;font-size:9.2px;color:#cccccc;font-weight:normal;font-style:italic;">main.dart</div>
<div class="ui" style="left:118.40px;top:63.50px;height:14px;line-height:14px;font-size:8.8px;color:#a0a0a0;font-weight:normal;font-style:italic;">lib</div>
<svg class="a" style="left:36.70px;top:82.60px;" width="7" height="5" viewBox="0 0 7 5" fill="none" stroke="#cccccc" stroke-width="1" stroke-linecap="round" stroke-linejoin="round"><path d="M0.8 1.2 L3.5 4 L6.2 1.2" stroke="#cccccc" stroke-width="0.9"/></svg>
<div class="ui" style="left:46.80px;top:78.10px;height:14px;line-height:14px;font-size:7.55px;color:#cccccc;font-weight:bold;font-style:normal;">FLUTTER_APPLICATION_1</div>
<svg class="a" style="left:45.50px;top:96.40px;" width="5" height="7" viewBox="0 0 5 7" fill="none" stroke="#cccccc" stroke-width="1" stroke-linecap="round" stroke-linejoin="round"><path d="M1.2 0.8 L4 3.5 L1.2 6.2" stroke="#cccccc" stroke-width="0.9"/></svg>
<div class="ui" style="left:56.00px;top:93.20px;height:14px;line-height:14px;font-size:9.15px;color:#cccccc;font-weight:normal;font-style:normal;">.dart_tool</div>
<svg class="a" style="left:45.50px;top:111.20px;" width="5" height="7" viewBox="0 0 5 7" fill="none" stroke="#cccccc" stroke-width="1" stroke-linecap="round" stroke-linejoin="round"><path d="M1.2 0.8 L4 3.5 L1.2 6.2" stroke="#cccccc" stroke-width="0.9"/></svg>
<div class="ui" style="left:56.00px;top:108.00px;height:14px;line-height:14px;font-size:9.15px;color:#cccccc;font-weight:normal;font-style:normal;">.idea</div>
<svg class="a" style="left:45.50px;top:126.00px;" width="5" height="7" viewBox="0 0 5 7" fill="none" stroke="#cccccc" stroke-width="1" stroke-linecap="round" stroke-linejoin="round"><path d="M1.2 0.8 L4 3.5 L1.2 6.2" stroke="#cccccc" stroke-width="0.9"/></svg>
<div class="ui" style="left:56.00px;top:122.80px;height:14px;line-height:14px;font-size:9.15px;color:#cccccc;font-weight:normal;font-style:normal;">.vscode</div>
<svg class="a" style="left:45.50px;top:140.80px;" width="5" height="7" viewBox="0 0 5 7" fill="none" stroke="#cccccc" stroke-width="1" stroke-linecap="round" stroke-linejoin="round"><path d="M1.2 0.8 L4 3.5 L1.2 6.2" stroke="#cccccc" stroke-width="0.9"/></svg>
<div class="ui" style="left:56.00px;top:137.60px;height:14px;line-height:14px;font-size:9.15px;color:#cccccc;font-weight:normal;font-style:normal;">android</div>
<svg class="a" style="left:45.50px;top:155.60px;" width="5" height="7" viewBox="0 0 5 7" fill="none" stroke="#cccccc" stroke-width="1" stroke-linecap="round" stroke-linejoin="round"><path d="M1.2 0.8 L4 3.5 L1.2 6.2" stroke="#cccccc" stroke-width="0.9"/></svg>
<div class="ui" style="left:56.00px;top:152.40px;height:14px;line-height:14px;font-size:9.15px;color:#cccccc;font-weight:normal;font-style:normal;">build</div>
<svg class="a" style="left:45.50px;top:171.40px;" width="7" height="5" viewBox="0 0 7 5" fill="none" stroke="#cccccc" stroke-width="1" stroke-linecap="round" stroke-linejoin="round"><path d="M0.8 1.2 L3.5 4 L6.2 1.2" stroke="#cccccc" stroke-width="0.9"/></svg>
<div class="ui" style="left:56.00px;top:167.20px;height:14px;line-height:14px;font-size:9.15px;color:#cccccc;font-weight:normal;font-style:normal;">ios</div>
<svg class="a" style="left:50.80px;top:185.20px;" width="5" height="7" viewBox="0 0 5 7" fill="none" stroke="#cccccc" stroke-width="1" stroke-linecap="round" stroke-linejoin="round"><path d="M1.2 0.8 L4 3.5 L1.2 6.2" stroke="#cccccc" stroke-width="0.9"/></svg>
<div class="ui" style="left:61.30px;top:182.00px;height:14px;line-height:14px;font-size:9.15px;color:#cccccc;font-weight:normal;font-style:normal;">Flutter</div>
<svg class="a" style="left:50.80px;top:200.00px;" width="5" height="7" viewBox="0 0 5 7" fill="none" stroke="#cccccc" stroke-width="1" stroke-linecap="round" stroke-linejoin="round"><path d="M1.2 0.8 L4 3.5 L1.2 6.2" stroke="#cccccc" stroke-width="0.9"/></svg>
<div class="ui" style="left:61.30px;top:196.80px;height:14px;line-height:14px;font-size:9.15px;color:#cccccc;font-weight:normal;font-style:normal;">Runner</div>
<svg class="a" style="left:50.80px;top:214.80px;" width="5" height="7" viewBox="0 0 5 7" fill="none" stroke="#cccccc" stroke-width="1" stroke-linecap="round" stroke-linejoin="round"><path d="M1.2 0.8 L4 3.5 L1.2 6.2" stroke="#cccccc" stroke-width="0.9"/></svg>
<div class="ui" style="left:61.30px;top:211.60px;height:14px;line-height:14px;font-size:9.15px;color:#cccccc;font-weight:normal;font-style:normal;">Runner.xcodeproj</div>
<svg class="a" style="left:50.80px;top:229.60px;" width="5" height="7" viewBox="0 0 5 7" fill="none" stroke="#cccccc" stroke-width="1" stroke-linecap="round" stroke-linejoin="round"><path d="M1.2 0.8 L4 3.5 L1.2 6.2" stroke="#cccccc" stroke-width="0.9"/></svg>
<div class="ui" style="left:61.30px;top:226.40px;height:14px;line-height:14px;font-size:9.15px;color:#cccccc;font-weight:normal;font-style:normal;">Runner.xcworkspace</div>
<svg class="a" style="left:50.80px;top:244.40px;" width="5" height="7" viewBox="0 0 5 7" fill="none" stroke="#cccccc" stroke-width="1" stroke-linecap="round" stroke-linejoin="round"><path d="M1.2 0.8 L4 3.5 L1.2 6.2" stroke="#cccccc" stroke-width="0.9"/></svg>
<div class="ui" style="left:61.30px;top:241.20px;height:14px;line-height:14px;font-size:9.15px;color:#cccccc;font-weight:normal;font-style:normal;">RunnerTests</div>
<svg class="a" style="left:49.30px;top:258.70px;" width="8" height="8" viewBox="0 0 8 8" fill="none" stroke="#cccccc" stroke-width="1" stroke-linecap="round" stroke-linejoin="round"><path d="M4 0.3 L7.7 4 L4 7.7 L0.3 4 Z" fill="#41535b" stroke="none"/><path d="M2.8 2.8 L5 5 M4 3.8 V5.6" stroke="#8aa4b0" stroke-width="0.7"/></svg>
<div class="ui" style="left:61.30px;top:256.00px;height:14px;line-height:14px;font-size:9.15px;color:#cccccc;font-weight:normal;font-style:normal;">.gitignore</div>
<svg class="a" style="left:45.50px;top:275.00px;" width="7" height="5" viewBox="0 0 7 5" fill="none" stroke="#cccccc" stroke-width="1" stroke-linecap="round" stroke-linejoin="round"><path d="M0.8 1.2 L3.5 4 L6.2 1.2" stroke="#cccccc" stroke-width="0.9"/></svg>
<div class="ui" style="left:56.00px;top:270.80px;height:14px;line-height:14px;font-size:9.15px;color:#cccccc;font-weight:normal;font-style:normal;">lib</div>
<div class="a" style="left:33px;top:284.9px;width:201.3px;height:14.8px;background:#37373d"></div>
<div class="a" style="left:46.7px;top:284.9px;width:1px;height:14.8px;background:#585858"></div>
<svg class="a" style="left:49.30px;top:288.50px;" width="7.6" height="7.6" viewBox="0 0 7.6 7.6" fill="none" stroke="#cccccc" stroke-width="1" stroke-linecap="round" stroke-linejoin="round"><g transform="scale(0.95)"><circle cx="4" cy="4" r="3.7" fill="#62a0d8" stroke="none"/><path d="M1.0 2.4 L5.9 7.3 A3.5 3.5 0 0 1 1.0 2.4 Z" fill="#1a2129" stroke="none"/><circle cx="4" cy="4" r="3.5" fill="none" stroke="#5590c8" stroke-width="0.6"/></g></svg>
<div class="ui" style="left:61.30px;top:285.60px;height:14px;line-height:14px;font-size:9.15px;color:#cccccc;font-weight:normal;font-style:normal;">main.dart</div>
<svg class="a" style="left:45.50px;top:303.60px;" width="5" height="7" viewBox="0 0 5 7" fill="none" stroke="#cccccc" stroke-width="1" stroke-linecap="round" stroke-linejoin="round"><path d="M1.2 0.8 L4 3.5 L1.2 6.2" stroke="#cccccc" stroke-width="0.9"/></svg>
<div class="ui" style="left:56.00px;top:300.40px;height:14px;line-height:14px;font-size:9.15px;color:#cccccc;font-weight:normal;font-style:normal;">linux</div>
<svg class="a" style="left:45.50px;top:318.40px;" width="5" height="7" viewBox="0 0 5 7" fill="none" stroke="#cccccc" stroke-width="1" stroke-linecap="round" stroke-linejoin="round"><path d="M1.2 0.8 L4 3.5 L1.2 6.2" stroke="#cccccc" stroke-width="0.9"/></svg>
<div class="ui" style="left:56.00px;top:315.20px;height:14px;line-height:14px;font-size:9.15px;color:#cccccc;font-weight:normal;font-style:normal;">macos</div>
<svg class="a" style="left:45.50px;top:333.20px;" width="5" height="7" viewBox="0 0 5 7" fill="none" stroke="#cccccc" stroke-width="1" stroke-linecap="round" stroke-linejoin="round"><path d="M1.2 0.8 L4 3.5 L1.2 6.2" stroke="#cccccc" stroke-width="0.9"/></svg>
<div class="ui" style="left:56.00px;top:330.00px;height:14px;line-height:14px;font-size:9.15px;color:#cccccc;font-weight:normal;font-style:normal;">test</div>
<svg class="a" style="left:45.50px;top:348.00px;" width="5" height="7" viewBox="0 0 5 7" fill="none" stroke="#cccccc" stroke-width="1" stroke-linecap="round" stroke-linejoin="round"><path d="M1.2 0.8 L4 3.5 L1.2 6.2" stroke="#cccccc" stroke-width="0.9"/></svg>
<div class="ui" style="left:56.00px;top:344.80px;height:14px;line-height:14px;font-size:9.15px;color:#cccccc;font-weight:normal;font-style:normal;">web</div>
<svg class="a" style="left:45.50px;top:362.80px;" width="5" height="7" viewBox="0 0 5 7" fill="none" stroke="#cccccc" stroke-width="1" stroke-linecap="round" stroke-linejoin="round"><path d="M1.2 0.8 L4 3.5 L1.2 6.2" stroke="#cccccc" stroke-width="0.9"/></svg>
<div class="ui" style="left:56.00px;top:359.60px;height:14px;line-height:14px;font-size:9.15px;color:#cccccc;font-weight:normal;font-style:normal;">windows</div>
<svg class="a" style="left:44.00px;top:377.10px;" width="8" height="8" viewBox="0 0 8 8" fill="none" stroke="#cccccc" stroke-width="1" stroke-linecap="round" stroke-linejoin="round"><path d="M4 0.3 L7.7 4 L4 7.7 L0.3 4 Z" fill="#41535b" stroke="none"/><path d="M2.8 2.8 L5 5 M4 3.8 V5.6" stroke="#8aa4b0" stroke-width="0.7"/></svg>
<div class="ui" style="left:56.00px;top:374.40px;height:14px;line-height:14px;font-size:9.15px;color:#cccccc;font-weight:normal;font-style:normal;">.gitignore</div>
<svg class="a" style="left:44.00px;top:391.90px;" width="8" height="8" viewBox="0 0 8 8" fill="none" stroke="#cccccc" stroke-width="1" stroke-linecap="round" stroke-linejoin="round"><path d="M0.8 1.2 H7 M0.8 3.2 H5 M0.8 5.2 H7 M0.8 7.2 H4" stroke="#b0b0b0" stroke-width="0.9"/></svg>
<div class="ui" style="left:56.00px;top:389.20px;height:14px;line-height:14px;font-size:9.15px;color:#cccccc;font-weight:normal;font-style:normal;">.metadata</div>
<svg class="a" style="left:45.00px;top:406.20px;" width="6" height="9" viewBox="0 0 6 9" fill="none" stroke="#cccccc" stroke-width="1" stroke-linecap="round" stroke-linejoin="round"><path d="M3.6 0.8 L2.6 5.6" stroke="#a074c4" stroke-width="1.4"/><circle cx="2.2" cy="7.8" r="0.8" fill="#a074c4" stroke="none"/></svg>
<div class="ui" style="left:56.00px;top:404.00px;height:14px;line-height:14px;font-size:9.15px;color:#cccccc;font-weight:normal;font-style:normal;">analysis_options.yaml</div>
<svg class="a" style="left:44.00px;top:421.50px;" width="8" height="8" viewBox="0 0 8 8" fill="none" stroke="#cccccc" stroke-width="1" stroke-linecap="round" stroke-linejoin="round"><circle cx="1.5" cy="6.5" r="1" fill="#e37933" stroke="none"/><path d="M0.8 3.5 Q4.5 3.5 4.5 7.2 M0.8 1 Q7 1 7 7.2" stroke="#e37933" stroke-width="1"/></svg>
<div class="ui" style="left:56.00px;top:418.80px;height:14px;line-height:14px;font-size:9.15px;color:#cccccc;font-weight:normal;font-style:normal;">flutter_application_1.iml</div>
<svg class="a" style="left:44.00px;top:436.30px;" width="8" height="8" viewBox="0 0 8 8" fill="none" stroke="#cccccc" stroke-width="1" stroke-linecap="round" stroke-linejoin="round"><path d="M0.8 1.2 H7 M0.8 3.2 H5 M0.8 5.2 H7 M0.8 7.2 H4" stroke="#b0b0b0" stroke-width="0.9"/></svg>
<div class="ui" style="left:56.00px;top:433.60px;height:14px;line-height:14px;font-size:9.15px;color:#cccccc;font-weight:normal;font-style:normal;">pubspec.lock</div>
<svg class="a" style="left:45.00px;top:450.60px;" width="6" height="9" viewBox="0 0 6 9" fill="none" stroke="#cccccc" stroke-width="1" stroke-linecap="round" stroke-linejoin="round"><path d="M3.6 0.8 L2.6 5.6" stroke="#a074c4" stroke-width="1.4"/><circle cx="2.2" cy="7.8" r="0.8" fill="#a074c4" stroke="none"/></svg>
<div class="ui" style="left:56.00px;top:448.40px;height:14px;line-height:14px;font-size:9.15px;color:#cccccc;font-weight:normal;font-style:normal;">pubspec.yaml</div>
<svg class="a" style="left:43.00px;top:465.40px;" width="9" height="9" viewBox="0 0 9 9" fill="none" stroke="#cccccc" stroke-width="1" stroke-linecap="round" stroke-linejoin="round"><circle cx="4.5" cy="4.5" r="3.9" stroke="#519aba" stroke-width="0.9"/><path d="M4.5 3.9 V6.8" stroke="#519aba" stroke-width="0.9"/><circle cx="4.5" cy="2.5" r="0.5" fill="#519aba" stroke="none"/></svg>
<div class="ui" style="left:56.00px;top:463.20px;height:14px;line-height:14px;font-size:9.15px;color:#cccccc;font-weight:normal;font-style:normal;">README.md</div>
<div class="a" style="left:33px;top:541.4px;width:201.3px;height:1px;background:#2b2b2b"></div>
<svg class="a" style="left:37.50px;top:545.20px;" width="5" height="7" viewBox="0 0 5 7" fill="none" stroke="#cccccc" stroke-width="1" stroke-linecap="round" stroke-linejoin="round"><path d="M1.2 0.8 L4 3.5 L1.2 6.2" stroke="#cccccc" stroke-width="0.9"/></svg>
<div class="ui" style="left:46.60px;top:541.70px;height:14px;line-height:14px;font-size:7.4px;color:#cccccc;font-weight:bold;font-style:normal;">アウトライン</div>
<div class="a" style="left:33px;top:556.1px;width:201.3px;height:1px;background:#2b2b2b"></div>
<svg class="a" style="left:37.50px;top:559.90px;" width="5" height="7" viewBox="0 0 5 7" fill="none" stroke="#cccccc" stroke-width="1" stroke-linecap="round" stroke-linejoin="round"><path d="M1.2 0.8 L4 3.5 L1.2 6.2" stroke="#cccccc" stroke-width="0.9"/></svg>
<div class="ui" style="left:46.60px;top:556.40px;height:14px;line-height:14px;font-size:7.4px;color:#cccccc;font-weight:bold;font-style:normal;">タイムライン</div>
<div class="a" style="left:33px;top:570.8px;width:201.3px;height:1px;background:#2b2b2b"></div>
<svg class="a" style="left:37.50px;top:574.60px;" width="5" height="7" viewBox="0 0 5 7" fill="none" stroke="#cccccc" stroke-width="1" stroke-linecap="round" stroke-linejoin="round"><path d="M1.2 0.8 L4 3.5 L1.2 6.2" stroke="#cccccc" stroke-width="0.9"/></svg>
<div class="ui" style="left:46.60px;top:571.10px;height:14px;line-height:14px;font-size:7.5px;color:#cccccc;font-weight:bold;font-style:normal;">DEPENDENCIES</div>
<svg class="a" style="left:265.50px;top:8.00px;" width="10" height="8" viewBox="0 0 10 8" fill="none" stroke="#cccccc" stroke-width="1" stroke-linecap="round" stroke-linejoin="round"><path d="M9.5 4 H1 M4.2 0.8 L1 4 L4.2 7.2" stroke-width="0.9"/></svg>
<svg class="a" style="left:283.50px;top:8.00px;" width="10" height="8" viewBox="0 0 10 8" fill="none" stroke="#cccccc" stroke-width="1" stroke-linecap="round" stroke-linejoin="round"><path d="M0.5 4 H9 M5.8 0.8 L9 4 L5.8 7.2" stroke="#7a7a7a" stroke-width="0.9"/></svg>
<div class="a" style="left:302.3px;top:3.8px;width:365.7px;height:15.7px;background:#222222;border:1px solid #363636;border-radius:4px"></div>
<svg class="a" style="left:441.00px;top:7.50px;" width="10" height="10" viewBox="0 0 10 10" fill="none" stroke="#cccccc" stroke-width="1" stroke-linecap="round" stroke-linejoin="round"><circle cx="4" cy="4" r="3.2" stroke-width="0.9"/><path d="M6.3 6.3 L9.2 9.2" stroke-width="0.9"/></svg>
<div class="ui" style="left:454.20px;top:4.80px;height:14px;line-height:14px;font-size:8.58px;color:#cccccc;font-weight:normal;font-style:normal;">flutter_application_1</div>
<svg class="a" style="left:677.00px;top:6.00px;" width="12" height="12" viewBox="0 0 12 12" fill="none" stroke="#cccccc" stroke-width="1" stroke-linecap="round" stroke-linejoin="round"><path d="M5 2.2 H2.3 Q1.2 2.2 1.2 3.3 V8.2 Q1.2 9.3 2.3 9.3 H3.2 V11.2 L5.6 9.3 H9.3 Q10.4 9.3 10.4 8.2" stroke-width="0.95"/><path d="M7.6 0.30000000000000027 L8.411999999999999 2.388 L10.5 3.2 L8.411999999999999 4.0120000000000005 L7.6 6.1 L6.787999999999999 4.0120000000000005 L4.699999999999999 3.2 L6.787999999999999 2.388 Z M10.3 5.1 L10.72 6.18 L11.8 6.6 L10.72 7.02 L10.3 8.1 L9.88 7.02 L8.8 6.6 L9.88 6.18 Z" fill="#dddddd" stroke="none"/></svg>
<svg class="a" style="left:690.50px;top:10.00px;" width="6" height="4" viewBox="0 0 6 4" fill="none" stroke="#cccccc" stroke-width="1" stroke-linecap="round" stroke-linejoin="round"><path d="M0.6 0.8 L3 3.2 L5.4 0.8" stroke-width="0.8"/></svg>
<svg class="a" style="left:888.50px;top:7.00px;" width="11" height="10" viewBox="0 0 11 10" fill="none" stroke="#cccccc" stroke-width="1" stroke-linecap="round" stroke-linejoin="round"><rect x="0.6" y="0.6" width="4" height="8.8" rx="1" stroke-width="0.9"/><circle cx="8.4" cy="2.3" r="1.45" stroke-width="0.85"/><path d="M8.4 5.4 Q6.9 7 6.9 8 Q6.9 9.4 8.4 9.4 Q9.9 9.4 9.9 8 Q9.9 7 8.4 5.4 Z" stroke-width="0.85"/></svg>
<svg class="a" style="left:905.50px;top:7.00px;" width="11" height="10" viewBox="0 0 11 10" fill="none" stroke="#cccccc" stroke-width="1" stroke-linecap="round" stroke-linejoin="round"><rect x="0.6" y="0.6" width="9.8" height="8.8" rx="1" stroke-width="0.9"/><rect x="0.6" y="0.6" width="3.6" height="8.8" fill="#cccccc" stroke="none"/><path d="M4.2 0.6 V9.4" stroke-width="0.9"/></svg>
<svg class="a" style="left:923.30px;top:7.00px;" width="11" height="10" viewBox="0 0 11 10" fill="none" stroke="#cccccc" stroke-width="1" stroke-linecap="round" stroke-linejoin="round"><rect x="0.6" y="0.6" width="9.8" height="8.8" rx="1" stroke-width="0.9"/><path d="M0.6 6.4 H10.4" stroke-width="0.9"/></svg>
<svg class="a" style="left:940.70px;top:7.00px;" width="11" height="10" viewBox="0 0 11 10" fill="none" stroke="#cccccc" stroke-width="1" stroke-linecap="round" stroke-linejoin="round"><rect x="0.6" y="0.6" width="9.8" height="8.8" rx="1" stroke-width="0.9"/><path d="M6.8 0.6 V9.4" stroke-width="0.9"/></svg>
<svg class="a" style="left:244.90px;top:31.70px;" width="8" height="8" viewBox="0 0 8 8" fill="none" stroke="#cccccc" stroke-width="1" stroke-linecap="round" stroke-linejoin="round"><g transform="scale(1.0)"><circle cx="4" cy="4" r="3.7" fill="#62a0d8" stroke="none"/><path d="M1.0 2.4 L5.9 7.3 A3.5 3.5 0 0 1 1.0 2.4 Z" fill="#1a2129" stroke="none"/><circle cx="4" cy="4" r="3.5" fill="none" stroke="#5590c8" stroke-width="0.6"/></g></svg>
<div class="ui" style="left:256.90px;top:29.30px;height:14px;line-height:14px;font-size:9.25px;color:#cccccc;font-weight:normal;font-style:italic;">main.dart</div>
<svg class="a" style="left:303.00px;top:33.00px;" width="7" height="7" viewBox="0 0 7 7" fill="none" stroke="#cccccc" stroke-width="1" stroke-linecap="round" stroke-linejoin="round"><path d="M0.7 0.7 L6.3 6.3 M6.3 0.7 L0.7 6.3" stroke-width="0.9"/></svg>
<div class="ui" style="left:246.00px;top:48.00px;height:14px;line-height:14px;font-size:9px;color:#bdbdbd;font-weight:normal;font-style:normal;">lib</div>
<svg class="a" style="left:261.00px;top:51.50px;" width="5" height="7" viewBox="0 0 5 7" fill="none" stroke="#cccccc" stroke-width="1" stroke-linecap="round" stroke-linejoin="round"><path d="M1.2 0.8 L4 3.5 L1.2 6.2" stroke="#a9a9a9" stroke-width="0.9"/></svg>
<svg class="a" style="left:268.50px;top:51.20px;" width="7.6" height="7.6" viewBox="0 0 7.6 7.6" fill="none" stroke="#cccccc" stroke-width="1" stroke-linecap="round" stroke-linejoin="round"><g transform="scale(0.95)"><circle cx="4" cy="4" r="3.7" fill="#62a0d8" stroke="none"/><path d="M1.0 2.4 L5.9 7.3 A3.5 3.5 0 0 1 1.0 2.4 Z" fill="#1a2129" stroke="none"/><circle cx="4" cy="4" r="3.5" fill="none" stroke="#5590c8" stroke-width="0.6"/></g></svg>
<div class="ui" style="left:281.50px;top:48.00px;height:14px;line-height:14px;font-size:9px;color:#bdbdbd;font-weight:normal;font-style:normal;">main.dart</div>
<svg class="a" style="left:324.00px;top:51.50px;" width="5" height="7" viewBox="0 0 5 7" fill="none" stroke="#cccccc" stroke-width="1" stroke-linecap="round" stroke-linejoin="round"><path d="M1.2 0.8 L4 3.5 L1.2 6.2" stroke="#a9a9a9" stroke-width="0.9"/></svg>
<div class="ui" style="left:330.50px;top:48.50px;height:14px;line-height:14px;font-size:8px;color:#bdbdbd;font-weight:normal;font-style:normal;">...</div>
<svg class="a" style="left:896.00px;top:31.00px;" width="12" height="11" viewBox="0 0 12 11" fill="none" stroke="#cccccc" stroke-width="1" stroke-linecap="round" stroke-linejoin="round"><path d="M4.5 1 L11 5 L6.5 8" stroke-width="0.9"/><path d="M4.5 1 V4.5" stroke-width="0.9"/><circle cx="3.3" cy="7.6" r="2.3" stroke-width="0.9"/><path d="M1.3 6.3 L0.5 5.8 M5.3 6.3 L6.1 5.8" stroke-width="0.7"/></svg>
<svg class="a" style="left:910.00px;top:34.50px;" width="6" height="4" viewBox="0 0 6 4" fill="none" stroke="#cccccc" stroke-width="1" stroke-linecap="round" stroke-linejoin="round"><path d="M0.6 0.8 L3 3.2 L5.4 0.8" stroke-width="0.8"/></svg>
<svg class="a" style="left:923.50px;top:31.00px;" width="11" height="10" viewBox="0 0 11 10" fill="none" stroke="#cccccc" stroke-width="1" stroke-linecap="round" stroke-linejoin="round"><rect x="0.6" y="0.6" width="9.8" height="8.8" rx="1.2" stroke-width="0.9"/><path d="M5.5 0.6 V9.4" stroke-width="0.9"/></svg>
<svg class="a" style="left:941.00px;top:33.50px;" width="11" height="4" viewBox="0 0 11 4" fill="none" stroke="#cccccc" stroke-width="1" stroke-linecap="round" stroke-linejoin="round"><circle cx="1.6" cy="2" r="0.85" fill="#cccccc" stroke="none"/><circle cx="5.3" cy="2" r="0.85" fill="#cccccc" stroke="none"/><circle cx="9" cy="2" r="0.85" fill="#cccccc" stroke="none"/></svg>
<div class="a" style="left:284px;top:62px;width:603px;height:14.17px;border-top:1px solid #282828;border-bottom:1px solid #282828"></div>
<div class="a" style="left:289.4px;top:62.5px;width:1px;height:13px;background:#aeafad"></div>
<svg class="a" style="left:285.00px;top:75.50px;" width="9" height="11" viewBox="0 0 9 11" fill="none" stroke="#cccccc" stroke-width="1" stroke-linecap="round" stroke-linejoin="round"><circle cx="4.4" cy="4" r="3.4" fill="#f2c233" stroke="none"/><rect x="2.6" y="6" width="3.6" height="4.2" rx="0.6" fill="#f2c233" stroke="none"/><rect x="3.5" y="7.6" width="1.8" height="1.6" fill="#6b5a1a" stroke="none"/></svg>
<div class="ui" style="left:284.00px;top:90.60px;height:12px;line-height:12px;font-size:8.4px;color:#999999;font-weight:normal;font-style:normal;">Run | Debug | Profile</div>
<div class="a" style="left:738px;top:62px;width:2px;height:523.5px;background:#393939"></div>
<div class="a" style="left:952px;top:62.5px;width:10px;height:1.5px;background:#6a6a6a"></div>
<div class="a" style="left:0;top:585.8px;width:23.5px;height:14.700000000000045px;background:#2f7bd8"></div>
<svg class="a" style="left:8.20px;top:589.20px;" width="8" height="8" viewBox="0 0 8 8" fill="none" stroke="#cccccc" stroke-width="1" stroke-linecap="round" stroke-linejoin="round"><path d="M0.7 3.4 L3 5.1 L0.7 6.9" stroke="#ffffff" stroke-width="0.85"/><path d="M7.3 0.8 L5 2.5 L7.3 4.3" stroke="#ffffff" stroke-width="0.85"/></svg>
<svg class="a" style="left:28.80px;top:588.80px;" width="9" height="9" viewBox="0 0 9 9" fill="none" stroke="#cccccc" stroke-width="1" stroke-linecap="round" stroke-linejoin="round"><circle cx="4.5" cy="4.5" r="3.9" stroke-width="0.8"/><path d="M3 3 L6 6 M6 3 L3 6" stroke-width="0.8"/></svg>
<div class="ui" style="left:40.80px;top:586.20px;height:14px;line-height:14px;font-size:8.55px;color:#cccccc;font-weight:normal;font-style:normal;">0</div>
<svg class="a" style="left:47.80px;top:588.60px;" width="9.5" height="9" viewBox="0 0 9.5 9" fill="none" stroke="#cccccc" stroke-width="1" stroke-linecap="round" stroke-linejoin="round"><path d="M4.75 0.8 L8.9 8.2 H0.6 Z" stroke-width="0.8"/><path d="M4.75 3.5 V5.6" stroke-width="0.8"/><circle cx="4.75" cy="6.9" r="0.35" fill="#cccccc"/></svg>
<div class="ui" style="left:59.50px;top:586.20px;height:14px;line-height:14px;font-size:8.55px;color:#cccccc;font-weight:normal;font-style:normal;">0</div>
<div class="a" style="left:497.9px;top:586px;width:22.700000000000045px;height:14.5px;background:#3a3d41"></div>
<svg class="a" style="left:504.50px;top:588.80px;" width="10" height="10" viewBox="0 0 10 10" fill="none" stroke="#cccccc" stroke-width="1" stroke-linecap="round" stroke-linejoin="round"><circle cx="4.2" cy="4.2" r="3.4" stroke-width="0.9"/><path d="M6.6 6.6 L9.2 9.2 M2.6 4.2 H5.8 M4.2 2.6 V5.8" stroke-width="0.9"/></svg>
<div class="ui" style="left:526.00px;top:586.20px;height:14px;line-height:14px;font-size:8.2px;color:#cccccc;font-weight:normal;font-style:normal;">行&nbsp;1、列&nbsp;2</div>
<div class="ui" style="left:576.00px;top:586.20px;height:14px;line-height:14px;font-size:7.55px;color:#cccccc;font-weight:normal;font-style:normal;">スペース: 2</div>
<div class="ui" style="left:627.00px;top:586.20px;height:14px;line-height:14px;font-size:8.55px;color:#cccccc;font-weight:normal;font-style:normal;">UTF-8</div>
<div class="ui" style="left:662.80px;top:586.20px;height:14px;line-height:14px;font-size:8.55px;color:#cccccc;font-weight:normal;font-style:normal;">LF</div>
<div class="ui" style="left:683.40px;top:586.20px;height:14px;line-height:14px;font-size:8.8px;color:#cccccc;font-weight:normal;font-style:normal;">{&thinsp;} Dart</div>
<div class="a" style="left:717.9px;top:586px;width:97.10000000000002px;height:14.5px;background:#3a3d41"></div>
<svg class="a" style="left:723.50px;top:588.50px;" width="10" height="10" viewBox="0 0 10 10" fill="none" stroke="#cccccc" stroke-width="1" stroke-linecap="round" stroke-linejoin="round"><path d="M2 4 Q2 1.5 5 1.5 Q8 1.5 8 4 V7.5 Q8 8.8 5 8.8 Q2 8.8 2 7.5 Z" stroke-width="0.9"/><path d="M1 6 H9" stroke-width="0.9"/><circle cx="3.8" cy="5" r="0.6" fill="#ccc"/><circle cx="6.2" cy="5" r="0.6" fill="#ccc"/></svg>
<div class="ui" style="left:736.00px;top:586.20px;height:14px;line-height:14px;font-size:8.0px;color:#cccccc;font-weight:normal;font-style:normal;">セットアップの完了</div>
<div class="ui" style="left:820.70px;top:586.20px;height:14px;line-height:14px;font-size:8.53px;color:#cccccc;font-weight:normal;font-style:normal;">iPhone 16 Pro (ios simulator)</div>
<svg class="a" style="left:942.00px;top:588.50px;" width="10" height="10" viewBox="0 0 10 10" fill="none" stroke="#cccccc" stroke-width="1" stroke-linecap="round" stroke-linejoin="round"><path d="M2 7.5 V4.5 Q2 1.5 5 1.5 Q7 1.5 7.8 3 M8 5.5 V7.5 H1 M3.8 8.8 H6.2" stroke-width="0.9"/><circle cx="8.2" cy="2.4" r="1.6" fill="#cccccc" stroke="none"/></svg>
<svg class="a" style="left:889.5px;top:62px;opacity:.5" width="50" height="140"><rect x="0.00" y="0.60" width="3.34" height="0.9" fill="#569cd6"/><rect x="3.89" y="0.60" width="17.24" height="0.9" fill="#ce9178"/><rect x="21.13" y="0.60" width="0.56" height="0.9" fill="#d4d4d4"/><rect x="0.00" y="2.80" width="2.22" height="0.9" fill="#569cd6"/><rect x="2.78" y="2.80" width="2.22" height="0.9" fill="#dcdcaa"/><rect x="5.00" y="2.80" width="1.11" height="0.9" fill="#d4d4d4"/><rect x="6.67" y="2.80" width="0.56" height="0.9" fill="#d4d4d4"/><rect x="1.11" y="3.90" width="3.34" height="0.9" fill="#dcdcaa"/><rect x="4.45" y="3.90" width="0.56" height="0.9" fill="#d4d4d4"/><rect x="5.00" y="3.90" width="2.78" height="0.9" fill="#569cd6"/><rect x="8.34" y="3.90" width="2.78" height="0.9" fill="#4ec9b0"/><rect x="11.12" y="3.90" width="2.22" height="0.9" fill="#d4d4d4"/><rect x="0.00" y="5.00" width="0.56" height="0.9" fill="#d4d4d4"/><rect x="0.00" y="7.20" width="2.78" height="0.9" fill="#569cd6"/><rect x="3.34" y="7.20" width="2.78" height="0.9" fill="#4ec9b0"/><rect x="6.67" y="7.20" width="3.89" height="0.9" fill="#569cd6"/><rect x="11.12" y="7.20" width="8.34" height="0.9" fill="#4ec9b0"/><rect x="20.02" y="7.20" width="0.56" height="0.9" fill="#d4d4d4"/><rect x="1.11" y="8.30" width="2.78" height="0.9" fill="#569cd6"/><rect x="4.45" y="8.30" width="2.78" height="0.9" fill="#4ec9b0"/><rect x="7.23" y="8.30" width="1.11" height="0.9" fill="#d4d4d4"/><rect x="8.34" y="8.30" width="2.78" height="0.9" fill="#569cd6"/><rect x="11.12" y="8.30" width="0.56" height="0.9" fill="#d4d4d4"/><rect x="11.68" y="8.30" width="1.67" height="0.9" fill="#9cdcfe"/><rect x="13.34" y="8.30" width="1.67" height="0.9" fill="#d4d4d4"/><rect x="1.11" y="10.50" width="1.11" height="0.9" fill="#6a9955"/><rect x="2.78" y="10.50" width="2.22" height="0.9" fill="#6a9955"/><rect x="5.56" y="10.50" width="3.34" height="0.9" fill="#6a9955"/><rect x="9.45" y="10.50" width="1.11" height="0.9" fill="#6a9955"/><rect x="11.12" y="10.50" width="1.67" height="0.9" fill="#6a9955"/><rect x="13.34" y="10.50" width="2.22" height="0.9" fill="#6a9955"/><rect x="16.12" y="10.50" width="1.11" height="0.9" fill="#6a9955"/><rect x="17.79" y="10.50" width="2.22" height="0.9" fill="#6a9955"/><rect x="20.57" y="10.50" width="6.67" height="0.9" fill="#6a9955"/><rect x="1.11" y="11.60" width="5.00" height="0.9" fill="#cccccc"/><rect x="1.11" y="12.70" width="3.34" height="0.9" fill="#4ec9b0"/><rect x="5.00" y="12.70" width="2.78" height="0.9" fill="#dcdcaa"/><rect x="7.78" y="12.70" width="0.56" height="0.9" fill="#d4d4d4"/><rect x="8.34" y="12.70" width="6.67" height="0.9" fill="#4ec9b0"/><rect x="15.57" y="12.70" width="3.89" height="0.9" fill="#9cdcfe"/><rect x="19.46" y="12.70" width="0.56" height="0.9" fill="#d4d4d4"/><rect x="20.57" y="12.70" width="0.56" height="0.9" fill="#d4d4d4"/><rect x="2.22" y="13.80" width="3.34" height="0.9" fill="#c586c0"/><rect x="6.12" y="13.80" width="6.12" height="0.9" fill="#4ec9b0"/><rect x="12.23" y="13.80" width="0.56" height="0.9" fill="#d4d4d4"/><rect x="3.34" y="14.90" width="2.78" height="0.9" fill="#9cdcfe"/><rect x="6.12" y="14.90" width="0.56" height="0.9" fill="#d4d4d4"/><rect x="7.23" y="14.90" width="4.45" height="0.9" fill="#ce9178"/><rect x="12.23" y="14.90" width="2.78" height="0.9" fill="#ce9178"/><rect x="15.01" y="14.90" width="0.56" height="0.9" fill="#d4d4d4"/><rect x="3.34" y="16.00" width="2.78" height="0.9" fill="#9cdcfe"/><rect x="6.12" y="16.00" width="0.56" height="0.9" fill="#d4d4d4"/><rect x="7.23" y="16.00" width="5.00" height="0.9" fill="#4ec9b0"/><rect x="12.23" y="16.00" width="0.56" height="0.9" fill="#d4d4d4"/><rect x="4.45" y="17.10" width="1.11" height="0.9" fill="#6a9955"/><rect x="6.12" y="17.10" width="2.22" height="0.9" fill="#6a9955"/><rect x="8.90" y="17.10" width="1.11" height="0.9" fill="#6a9955"/><rect x="10.56" y="17.10" width="1.67" height="0.9" fill="#6a9955"/><rect x="12.79" y="17.10" width="2.78" height="0.9" fill="#6a9955"/><rect x="16.12" y="17.10" width="1.11" height="0.9" fill="#6a9955"/><rect x="17.79" y="17.10" width="2.22" height="0.9" fill="#6a9955"/><rect x="20.57" y="17.10" width="6.67" height="0.9" fill="#6a9955"/><rect x="4.45" y="18.20" width="1.11" height="0.9" fill="#6a9955"/><rect x="4.45" y="19.30" width="1.11" height="0.9" fill="#6a9955"/><rect x="6.12" y="19.30" width="1.67" height="0.9" fill="#6a9955"/><rect x="8.34" y="19.30" width="2.78" height="0.9" fill="#6a9955"/><rect x="11.68" y="19.30" width="1.67" height="0.9" fill="#6a9955"/><rect x="13.90" y="19.30" width="3.89" height="0.9" fill="#6a9955"/><rect x="18.35" y="19.30" width="2.22" height="0.9" fill="#6a9955"/><rect x="21.13" y="19.30" width="6.12" height="0.9" fill="#6a9955"/><rect x="27.80" y="19.30" width="2.22" height="0.9" fill="#6a9955"/><rect x="30.58" y="19.30" width="4.45" height="0.9" fill="#6a9955"/><rect x="35.58" y="19.30" width="2.78" height="0.9" fill="#6a9955"/><rect x="38.92" y="19.30" width="3.34" height="0.9" fill="#6a9955"/><rect x="42.81" y="19.30" width="1.67" height="0.9" fill="#6a9955"/><rect x="4.45" y="20.40" width="1.11" height="0.9" fill="#6a9955"/><rect x="6.12" y="20.40" width="1.67" height="0.9" fill="#6a9955"/><rect x="8.34" y="20.40" width="6.12" height="0.9" fill="#6a9955"/><rect x="15.01" y="20.40" width="1.67" height="0.9" fill="#6a9955"/><rect x="17.24" y="20.40" width="0.56" height="0.9" fill="#6a9955"/><rect x="18.35" y="20.40" width="3.34" height="0.9" fill="#6a9955"/><rect x="22.24" y="20.40" width="4.45" height="0.9" fill="#6a9955"/><rect x="27.24" y="20.40" width="2.78" height="0.9" fill="#6a9955"/><rect x="30.58" y="20.40" width="3.89" height="0.9" fill="#6a9955"/><rect x="35.03" y="20.40" width="4.45" height="0.9" fill="#6a9955"/><rect x="40.03" y="20.40" width="1.67" height="0.9" fill="#6a9955"/><rect x="42.26" y="20.40" width="2.22" height="0.9" fill="#6a9955"/><rect x="4.45" y="21.50" width="1.11" height="0.9" fill="#6a9955"/><rect x="6.12" y="21.50" width="1.67" height="0.9" fill="#6a9955"/><rect x="8.34" y="21.50" width="4.45" height="0.9" fill="#6a9955"/><rect x="13.34" y="21.50" width="1.67" height="0.9" fill="#6a9955"/><rect x="15.57" y="21.50" width="5.00" height="0.9" fill="#6a9955"/><rect x="21.13" y="21.50" width="1.11" height="0.9" fill="#6a9955"/><rect x="22.80" y="21.50" width="1.67" height="0.9" fill="#6a9955"/><rect x="25.02" y="21.50" width="6.12" height="0.9" fill="#6a9955"/><rect x="31.69" y="21.50" width="2.78" height="0.9" fill="#6a9955"/><rect x="35.03" y="21.50" width="1.11" height="0.9" fill="#6a9955"/><rect x="36.70" y="21.50" width="6.67" height="0.9" fill="#6a9955"/><rect x="4.45" y="22.60" width="1.11" height="0.9" fill="#6a9955"/><rect x="6.12" y="22.60" width="1.67" height="0.9" fill="#6a9955"/><rect x="8.34" y="22.60" width="2.22" height="0.9" fill="#6a9955"/><rect x="11.12" y="22.60" width="3.34" height="0.9" fill="#6a9955"/><rect x="15.01" y="22.60" width="2.22" height="0.9" fill="#6a9955"/><rect x="17.79" y="22.60" width="3.89" height="0.9" fill="#6a9955"/><rect x="22.24" y="22.60" width="2.78" height="0.9" fill="#6a9955"/><rect x="25.58" y="22.60" width="2.22" height="0.9" fill="#6a9955"/><rect x="28.36" y="22.60" width="3.89" height="0.9" fill="#6a9955"/><rect x="32.80" y="22.60" width="1.11" height="0.9" fill="#6a9955"/><rect x="34.47" y="22.60" width="2.78" height="0.9" fill="#6a9955"/><rect x="37.81" y="22.60" width="1.67" height="0.9" fill="#6a9955"/><rect x="40.03" y="22.60" width="2.22" height="0.9" fill="#6a9955"/><rect x="4.45" y="23.70" width="1.11" height="0.9" fill="#6a9955"/><rect x="6.12" y="23.70" width="3.89" height="0.9" fill="#6a9955"/><rect x="10.56" y="23.70" width="3.34" height="0.9" fill="#6a9955"/><rect x="14.46" y="23.70" width="1.11" height="0.9" fill="#6a9955"/><rect x="16.12" y="23.70" width="0.56" height="0.9" fill="#6a9955"/><rect x="17.24" y="23.70" width="9.45" height="0.9" fill="#6a9955"/><rect x="27.24" y="23.70" width="2.22" height="0.9" fill="#6a9955"/><rect x="30.02" y="23.70" width="1.11" height="0.9" fill="#6a9955"/><rect x="31.69" y="23.70" width="2.78" height="0.9" fill="#6a9955"/><rect x="35.03" y="23.70" width="1.67" height="0.9" fill="#6a9955"/><rect x="37.25" y="23.70" width="1.11" height="0.9" fill="#6a9955"/><rect x="38.92" y="23.70" width="1.67" height="0.9" fill="#6a9955"/><rect x="41.14" y="23.70" width="2.22" height="0.9" fill="#6a9955"/><rect x="4.45" y="24.80" width="1.11" height="0.9" fill="#6a9955"/><rect x="6.12" y="24.80" width="1.67" height="0.9" fill="#6a9955"/><rect x="8.34" y="24.80" width="3.89" height="0.9" fill="#6a9955"/><rect x="12.79" y="24.80" width="2.22" height="0.9" fill="#6a9955"/><rect x="15.57" y="24.80" width="1.11" height="0.9" fill="#6a9955"/><rect x="17.24" y="24.80" width="2.78" height="0.9" fill="#6a9955"/><rect x="20.57" y="24.80" width="1.67" height="0.9" fill="#6a9955"/><rect x="22.80" y="24.80" width="2.78" height="0.9" fill="#6a9955"/><rect x="4.45" y="25.90" width="1.11" height="0.9" fill="#6a9955"/><rect x="4.45" y="27.00" width="1.11" height="0.9" fill="#6a9955"/><rect x="6.12" y="27.00" width="3.34" height="0.9" fill="#6a9955"/><rect x="10.01" y="27.00" width="2.22" height="0.9" fill="#6a9955"/><rect x="12.79" y="27.00" width="1.67" height="0.9" fill="#6a9955"/><rect x="15.01" y="27.00" width="3.89" height="0.9" fill="#6a9955"/><rect x="19.46" y="27.00" width="3.34" height="0.9" fill="#6a9955"/><rect x="23.35" y="27.00" width="2.78" height="0.9" fill="#6a9955"/><rect x="26.69" y="27.00" width="2.22" height="0.9" fill="#6a9955"/><rect x="29.47" y="27.00" width="1.11" height="0.9" fill="#6a9955"/><rect x="31.14" y="27.00" width="2.78" height="0.9" fill="#6a9955"/><rect x="34.47" y="27.00" width="1.67" height="0.9" fill="#6a9955"/><rect x="36.70" y="27.00" width="6.12" height="0.9" fill="#6a9955"/><rect x="4.45" y="28.10" width="1.11" height="0.9" fill="#6a9955"/><rect x="6.12" y="28.10" width="2.78" height="0.9" fill="#6a9955"/><rect x="9.45" y="28.10" width="1.11" height="0.9" fill="#6a9955"/><rect x="11.12" y="28.10" width="1.67" height="0.9" fill="#6a9955"/><rect x="13.34" y="28.10" width="2.22" height="0.9" fill="#6a9955"/><rect x="16.12" y="28.10" width="3.34" height="0.9" fill="#6a9955"/><rect x="20.02" y="28.10" width="1.67" height="0.9" fill="#6a9955"/><rect x="22.24" y="28.10" width="3.89" height="0.9" fill="#6a9955"/><rect x="26.69" y="28.10" width="1.11" height="0.9" fill="#6a9955"/><rect x="28.36" y="28.10" width="2.78" height="0.9" fill="#6a9955"/><rect x="31.69" y="28.10" width="1.67" height="0.9" fill="#6a9955"/><rect x="33.92" y="28.10" width="3.34" height="0.9" fill="#6a9955"/><rect x="37.81" y="28.10" width="1.67" height="0.9" fill="#6a9955"/><rect x="40.03" y="28.10" width="1.67" height="0.9" fill="#6a9955"/><rect x="4.45" y="29.20" width="1.11" height="0.9" fill="#6a9955"/><rect x="6.12" y="29.20" width="3.89" height="0.9" fill="#6a9955"/><rect x="10.56" y="29.20" width="4.45" height="0.9" fill="#6a9955"/><rect x="4.45" y="30.30" width="1.11" height="0.9" fill="#6a9955"/><rect x="4.45" y="31.40" width="1.11" height="0.9" fill="#6a9955"/><rect x="6.12" y="31.40" width="2.22" height="0.9" fill="#6a9955"/><rect x="8.90" y="31.40" width="2.78" height="0.9" fill="#6a9955"/><rect x="12.23" y="31.40" width="1.67" height="0.9" fill="#6a9955"/><rect x="14.46" y="31.40" width="2.22" height="0.9" fill="#6a9955"/><rect x="17.24" y="31.40" width="2.22" height="0.9" fill="#6a9955"/><rect x="20.02" y="31.40" width="1.67" height="0.9" fill="#6a9955"/><rect x="22.24" y="31.40" width="2.22" height="0.9" fill="#6a9955"/><rect x="25.02" y="31.40" width="3.89" height="0.9" fill="#6a9955"/><rect x="29.47" y="31.40" width="2.22" height="0.9" fill="#6a9955"/><rect x="32.25" y="31.40" width="2.22" height="0.9" fill="#6a9955"/><rect x="35.03" y="31.40" width="3.89" height="0.9" fill="#6a9955"/><rect x="39.48" y="31.40" width="1.67" height="0.9" fill="#6a9955"/><rect x="41.70" y="31.40" width="1.11" height="0.9" fill="#6a9955"/><rect x="4.45" y="32.50" width="1.11" height="0.9" fill="#6a9955"/><rect x="6.12" y="32.50" width="3.34" height="0.9" fill="#6a9955"/><rect x="10.01" y="32.50" width="2.22" height="0.9" fill="#6a9955"/><rect x="12.79" y="32.50" width="2.22" height="0.9" fill="#6a9955"/><rect x="15.57" y="32.50" width="0.56" height="0.9" fill="#6a9955"/><rect x="16.68" y="32.50" width="1.67" height="0.9" fill="#6a9955"/><rect x="18.90" y="32.50" width="3.89" height="0.9" fill="#6a9955"/><rect x="4.45" y="33.60" width="6.12" height="0.9" fill="#9cdcfe"/><rect x="10.56" y="33.60" width="0.56" height="0.9" fill="#d4d4d4"/><rect x="11.68" y="33.60" width="6.12" height="0.9" fill="#4ec9b0"/><rect x="17.79" y="33.60" width="0.56" height="0.9" fill="#d4d4d4"/><rect x="18.35" y="33.60" width="4.45" height="0.9" fill="#dcdcaa"/><rect x="22.80" y="33.60" width="0.56" height="0.9" fill="#d4d4d4"/><rect x="23.35" y="33.60" width="5.00" height="0.9" fill="#9cdcfe"/><rect x="28.36" y="33.60" width="0.56" height="0.9" fill="#d4d4d4"/><rect x="29.47" y="33.60" width="3.34" height="0.9" fill="#4ec9b0"/><rect x="32.80" y="33.60" width="0.56" height="0.9" fill="#d4d4d4"/><rect x="33.36" y="33.60" width="5.56" height="0.9" fill="#9cdcfe"/><rect x="38.92" y="33.60" width="1.11" height="0.9" fill="#d4d4d4"/><rect x="3.34" y="34.70" width="1.11" height="0.9" fill="#d4d4d4"/><rect x="3.34" y="35.80" width="2.22" height="0.9" fill="#9cdcfe"/><rect x="5.56" y="35.80" width="0.56" height="0.9" fill="#d4d4d4"/><rect x="6.67" y="35.80" width="2.78" height="0.9" fill="#569cd6"/><rect x="10.01" y="35.80" width="5.56" height="0.9" fill="#4ec9b0"/><rect x="15.57" y="35.80" width="0.56" height="0.9" fill="#d4d4d4"/><rect x="16.12" y="35.80" width="2.78" height="0.9" fill="#9cdcfe"/><rect x="18.90" y="35.80" width="0.56" height="0.9" fill="#d4d4d4"/><rect x="20.02" y="35.80" width="4.45" height="0.9" fill="#ce9178"/><rect x="25.02" y="35.80" width="2.22" height="0.9" fill="#ce9178"/><rect x="27.80" y="35.80" width="2.22" height="0.9" fill="#ce9178"/><rect x="30.58" y="35.80" width="2.78" height="0.9" fill="#ce9178"/><rect x="33.36" y="35.80" width="1.11" height="0.9" fill="#d4d4d4"/><rect x="2.22" y="36.90" width="1.11" height="0.9" fill="#d4d4d4"/><rect x="1.11" y="38.00" width="0.56" height="0.9" fill="#d4d4d4"/><rect x="0.00" y="39.10" width="0.56" height="0.9" fill="#d4d4d4"/><rect x="0.00" y="41.30" width="2.78" height="0.9" fill="#569cd6"/><rect x="3.34" y="41.30" width="5.56" height="0.9" fill="#4ec9b0"/><rect x="9.45" y="41.30" width="3.89" height="0.9" fill="#569cd6"/><rect x="13.90" y="41.30" width="7.78" height="0.9" fill="#4ec9b0"/><rect x="22.24" y="41.30" width="0.56" height="0.9" fill="#d4d4d4"/><rect x="1.11" y="42.40" width="2.78" height="0.9" fill="#569cd6"/><rect x="4.45" y="42.40" width="5.56" height="0.9" fill="#4ec9b0"/><rect x="10.01" y="42.40" width="1.11" height="0.9" fill="#d4d4d4"/><rect x="11.12" y="42.40" width="2.78" height="0.9" fill="#569cd6"/><rect x="13.90" y="42.40" width="0.56" height="0.9" fill="#d4d4d4"/><rect x="14.46" y="42.40" width="1.67" height="0.9" fill="#9cdcfe"/><rect x="16.12" y="42.40" width="0.56" height="0.9" fill="#d4d4d4"/><rect x="17.24" y="42.40" width="4.45" height="0.9" fill="#569cd6"/><rect x="22.24" y="42.40" width="2.22" height="0.9" fill="#569cd6"/><rect x="24.46" y="42.40" width="0.56" height="0.9" fill="#d4d4d4"/><rect x="25.02" y="42.40" width="2.78" height="0.9" fill="#9cdcfe"/><rect x="27.80" y="42.40" width="1.67" height="0.9" fill="#d4d4d4"/><rect x="1.11" y="44.60" width="1.11" height="0.9" fill="#6a9955"/><rect x="2.78" y="44.60" width="2.22" height="0.9" fill="#6a9955"/><rect x="5.56" y="44.60" width="3.34" height="0.9" fill="#6a9955"/><rect x="9.45" y="44.60" width="1.11" height="0.9" fill="#6a9955"/><rect x="11.12" y="44.60" width="1.67" height="0.9" fill="#6a9955"/><rect x="13.34" y="44.60" width="2.22" height="0.9" fill="#6a9955"/><rect x="16.12" y="44.60" width="2.22" height="0.9" fill="#6a9955"/><rect x="18.90" y="44.60" width="1.11" height="0.9" fill="#6a9955"/><rect x="20.57" y="44.60" width="2.22" height="0.9" fill="#6a9955"/><rect x="23.35" y="44.60" width="6.67" height="0.9" fill="#6a9955"/><rect x="30.58" y="44.60" width="1.11" height="0.9" fill="#6a9955"/><rect x="32.25" y="44.60" width="1.11" height="0.9" fill="#6a9955"/><rect x="33.92" y="44.60" width="5.00" height="0.9" fill="#6a9955"/><rect x="39.48" y="44.60" width="3.89" height="0.9" fill="#6a9955"/><rect x="1.11" y="45.70" width="1.11" height="0.9" fill="#6a9955"/><rect x="2.78" y="45.70" width="2.22" height="0.9" fill="#6a9955"/><rect x="5.56" y="45.70" width="1.11" height="0.9" fill="#6a9955"/><rect x="7.23" y="45.70" width="1.67" height="0.9" fill="#6a9955"/><rect x="9.45" y="45.70" width="0.56" height="0.9" fill="#6a9955"/><rect x="10.56" y="45.70" width="2.78" height="0.9" fill="#6a9955"/><rect x="13.90" y="45.70" width="3.34" height="0.9" fill="#6a9955"/><rect x="17.79" y="45.70" width="4.45" height="0.9" fill="#6a9955"/><rect x="22.80" y="45.70" width="3.34" height="0.9" fill="#6a9955"/><rect x="26.69" y="45.70" width="2.22" height="0.9" fill="#6a9955"/><rect x="29.47" y="45.70" width="4.45" height="0.9" fill="#6a9955"/><rect x="34.47" y="45.70" width="3.34" height="0.9" fill="#6a9955"/><rect x="38.36" y="45.70" width="2.22" height="0.9" fill="#6a9955"/><rect x="41.14" y="45.70" width="3.34" height="0.9" fill="#6a9955"/><rect x="1.11" y="46.80" width="1.11" height="0.9" fill="#6a9955"/><rect x="2.78" y="46.80" width="1.67" height="0.9" fill="#6a9955"/><rect x="5.00" y="46.80" width="1.11" height="0.9" fill="#6a9955"/><rect x="6.67" y="46.80" width="3.34" height="0.9" fill="#6a9955"/><rect x="1.11" y="49.00" width="1.11" height="0.9" fill="#6a9955"/><rect x="2.78" y="49.00" width="2.22" height="0.9" fill="#6a9955"/><rect x="5.56" y="49.00" width="2.78" height="0.9" fill="#6a9955"/><rect x="8.90" y="49.00" width="1.11" height="0.9" fill="#6a9955"/><rect x="10.56" y="49.00" width="1.67" height="0.9" fill="#6a9955"/><rect x="12.79" y="49.00" width="7.23" height="0.9" fill="#6a9955"/><rect x="20.57" y="49.00" width="1.67" height="0.9" fill="#6a9955"/><rect x="22.80" y="49.00" width="1.67" height="0.9" fill="#6a9955"/><rect x="25.02" y="49.00" width="3.34" height="0.9" fill="#6a9955"/><rect x="28.91" y="49.00" width="1.11" height="0.9" fill="#6a9955"/><rect x="30.58" y="49.00" width="2.78" height="0.9" fill="#6a9955"/><rect x="33.92" y="49.00" width="1.67" height="0.9" fill="#6a9955"/><rect x="36.14" y="49.00" width="3.34" height="0.9" fill="#6a9955"/><rect x="40.03" y="49.00" width="1.67" height="0.9" fill="#6a9955"/><rect x="42.26" y="49.00" width="2.22" height="0.9" fill="#6a9955"/><rect x="1.11" y="50.10" width="1.11" height="0.9" fill="#6a9955"/><rect x="2.78" y="50.10" width="2.22" height="0.9" fill="#6a9955"/><rect x="5.56" y="50.10" width="1.67" height="0.9" fill="#6a9955"/><rect x="7.78" y="50.10" width="3.34" height="0.9" fill="#6a9955"/><rect x="11.68" y="50.10" width="4.45" height="0.9" fill="#6a9955"/><rect x="16.68" y="50.10" width="1.11" height="0.9" fill="#6a9955"/><rect x="18.35" y="50.10" width="1.67" height="0.9" fill="#6a9955"/><rect x="20.57" y="50.10" width="3.34" height="0.9" fill="#6a9955"/><rect x="24.46" y="50.10" width="1.67" height="0.9" fill="#6a9955"/><rect x="26.69" y="50.10" width="2.22" height="0.9" fill="#6a9955"/><rect x="29.47" y="50.10" width="2.22" height="0.9" fill="#6a9955"/><rect x="32.25" y="50.10" width="1.67" height="0.9" fill="#6a9955"/><rect x="34.47" y="50.10" width="1.67" height="0.9" fill="#6a9955"/><rect x="36.70" y="50.10" width="3.89" height="0.9" fill="#6a9955"/><rect x="41.14" y="50.10" width="1.67" height="0.9" fill="#6a9955"/><rect x="1.11" y="51.20" width="1.11" height="0.9" fill="#6a9955"/><rect x="2.78" y="51.20" width="2.22" height="0.9" fill="#6a9955"/><rect x="5.56" y="51.20" width="1.11" height="0.9" fill="#6a9955"/><rect x="7.23" y="51.20" width="1.67" height="0.9" fill="#6a9955"/><rect x="9.45" y="51.20" width="2.78" height="0.9" fill="#6a9955"/><rect x="12.79" y="51.20" width="3.34" height="0.9" fill="#6a9955"/><rect x="16.68" y="51.20" width="1.11" height="0.9" fill="#6a9955"/><rect x="18.35" y="51.20" width="1.67" height="0.9" fill="#6a9955"/><rect x="20.57" y="51.20" width="3.34" height="0.9" fill="#6a9955"/><rect x="24.46" y="51.20" width="3.34" height="0.9" fill="#6a9955"/><rect x="28.36" y="51.20" width="1.11" height="0.9" fill="#6a9955"/><rect x="30.02" y="51.20" width="0.56" height="0.9" fill="#6a9955"/><rect x="31.14" y="51.20" width="3.34" height="0.9" fill="#6a9955"/><rect x="35.03" y="51.20" width="4.45" height="0.9" fill="#6a9955"/><rect x="40.03" y="51.20" width="1.67" height="0.9" fill="#6a9955"/><rect x="1.11" y="52.30" width="1.11" height="0.9" fill="#6a9955"/><rect x="2.78" y="52.30" width="3.34" height="0.9" fill="#6a9955"/><rect x="6.67" y="52.30" width="3.34" height="0.9" fill="#6a9955"/><rect x="10.56" y="52.30" width="4.45" height="0.9" fill="#6a9955"/><rect x="1.11" y="54.50" width="2.78" height="0.9" fill="#569cd6"/><rect x="4.45" y="54.50" width="3.34" height="0.9" fill="#4ec9b0"/><rect x="8.34" y="54.50" width="2.78" height="0.9" fill="#9cdcfe"/><rect x="11.12" y="54.50" width="0.56" height="0.9" fill="#d4d4d4"/><rect x="1.11" y="56.70" width="5.00" height="0.9" fill="#cccccc"/><rect x="1.11" y="57.80" width="2.78" height="0.9" fill="#4ec9b0"/><rect x="3.89" y="57.80" width="0.56" height="0.9" fill="#d4d4d4"/><rect x="4.45" y="57.80" width="5.56" height="0.9" fill="#4ec9b0"/><rect x="10.01" y="57.80" width="0.56" height="0.9" fill="#d4d4d4"/><rect x="11.12" y="57.80" width="6.12" height="0.9" fill="#dcdcaa"/><rect x="17.24" y="57.80" width="1.11" height="0.9" fill="#d4d4d4"/><rect x="18.90" y="57.80" width="1.11" height="0.9" fill="#d4d4d4"/><rect x="20.57" y="57.80" width="8.90" height="0.9" fill="#4ec9b0"/><rect x="29.47" y="57.80" width="1.67" height="0.9" fill="#d4d4d4"/><rect x="0.00" y="58.90" width="0.56" height="0.9" fill="#d4d4d4"/><rect x="0.00" y="61.10" width="2.78" height="0.9" fill="#569cd6"/><rect x="3.34" y="61.10" width="8.90" height="0.9" fill="#4ec9b0"/><rect x="12.79" y="61.10" width="3.89" height="0.9" fill="#569cd6"/><rect x="17.24" y="61.10" width="2.78" height="0.9" fill="#4ec9b0"/><rect x="20.02" y="61.10" width="0.56" height="0.9" fill="#d4d4d4"/><rect x="20.57" y="61.10" width="5.56" height="0.9" fill="#4ec9b0"/><rect x="26.13" y="61.10" width="0.56" height="0.9" fill="#d4d4d4"/><rect x="27.24" y="61.10" width="0.56" height="0.9" fill="#d4d4d4"/><rect x="1.11" y="62.20" width="1.67" height="0.9" fill="#569cd6"/><rect x="3.34" y="62.20" width="4.45" height="0.9" fill="#9cdcfe"/><rect x="8.34" y="62.20" width="0.56" height="0.9" fill="#d4d4d4"/><rect x="9.45" y="62.20" width="1.11" height="0.9" fill="#d4d4d4"/><rect x="1.11" y="64.40" width="2.22" height="0.9" fill="#569cd6"/><rect x="3.89" y="64.40" width="9.45" height="0.9" fill="#dcdcaa"/><rect x="13.34" y="64.40" width="1.11" height="0.9" fill="#d4d4d4"/><rect x="15.01" y="64.40" width="0.56" height="0.9" fill="#d4d4d4"/><rect x="2.22" y="65.50" width="4.45" height="0.9" fill="#dcdcaa"/><rect x="6.67" y="65.50" width="1.67" height="0.9" fill="#d4d4d4"/><rect x="8.90" y="65.50" width="0.56" height="0.9" fill="#d4d4d4"/><rect x="3.34" y="66.60" width="1.11" height="0.9" fill="#6a9955"/><rect x="5.00" y="66.60" width="2.22" height="0.9" fill="#6a9955"/><rect x="7.78" y="66.60" width="2.22" height="0.9" fill="#6a9955"/><rect x="10.56" y="66.60" width="1.11" height="0.9" fill="#6a9955"/><rect x="12.23" y="66.60" width="4.45" height="0.9" fill="#6a9955"/><rect x="17.24" y="66.60" width="2.78" height="0.9" fill="#6a9955"/><rect x="20.57" y="66.60" width="1.67" height="0.9" fill="#6a9955"/><rect x="22.80" y="66.60" width="3.89" height="0.9" fill="#6a9955"/><rect x="27.24" y="66.60" width="5.00" height="0.9" fill="#6a9955"/><rect x="32.80" y="66.60" width="2.22" height="0.9" fill="#6a9955"/><rect x="35.58" y="66.60" width="5.00" height="0.9" fill="#6a9955"/><rect x="41.14" y="66.60" width="1.67" height="0.9" fill="#6a9955"/><rect x="3.34" y="67.70" width="1.11" height="0.9" fill="#6a9955"/><rect x="5.00" y="67.70" width="3.89" height="0.9" fill="#6a9955"/><rect x="9.45" y="67.70" width="1.11" height="0.9" fill="#6a9955"/><rect x="11.12" y="67.70" width="2.22" height="0.9" fill="#6a9955"/><rect x="13.90" y="67.70" width="3.34" height="0.9" fill="#6a9955"/><rect x="17.79" y="67.70" width="2.78" height="0.9" fill="#6a9955"/><rect x="21.13" y="67.70" width="3.34" height="0.9" fill="#6a9955"/><rect x="25.02" y="67.70" width="1.11" height="0.9" fill="#6a9955"/><rect x="26.69" y="67.70" width="1.11" height="0.9" fill="#6a9955"/><rect x="28.36" y="67.70" width="2.78" height="0.9" fill="#6a9955"/><rect x="31.69" y="67.70" width="1.67" height="0.9" fill="#6a9955"/><rect x="33.92" y="67.70" width="2.78" height="0.9" fill="#6a9955"/><rect x="37.25" y="67.70" width="3.34" height="0.9" fill="#6a9955"/><rect x="41.14" y="67.70" width="2.78" height="0.9" fill="#6a9955"/><rect x="3.34" y="68.80" width="1.11" height="0.9" fill="#6a9955"/><rect x="5.00" y="68.80" width="1.11" height="0.9" fill="#6a9955"/><rect x="6.67" y="68.80" width="2.22" height="0.9" fill="#6a9955"/><rect x="9.45" y="68.80" width="1.67" height="0.9" fill="#6a9955"/><rect x="11.68" y="68.80" width="3.89" height="0.9" fill="#6a9955"/><rect x="16.12" y="68.80" width="1.67" height="0.9" fill="#6a9955"/><rect x="18.35" y="68.80" width="3.89" height="0.9" fill="#6a9955"/><rect x="22.80" y="68.80" width="1.67" height="0.9" fill="#6a9955"/><rect x="25.02" y="68.80" width="3.89" height="0.9" fill="#6a9955"/><rect x="29.47" y="68.80" width="3.89" height="0.9" fill="#6a9955"/><rect x="33.92" y="68.80" width="1.11" height="0.9" fill="#6a9955"/><rect x="35.58" y="68.80" width="1.11" height="0.9" fill="#6a9955"/><rect x="37.25" y="68.80" width="3.89" height="0.9" fill="#6a9955"/><rect x="3.34" y="69.90" width="1.11" height="0.9" fill="#6a9955"/><rect x="5.00" y="69.90" width="4.45" height="0.9" fill="#6a9955"/><rect x="10.01" y="69.90" width="3.89" height="0.9" fill="#6a9955"/><rect x="14.46" y="69.90" width="3.89" height="0.9" fill="#6a9955"/><rect x="18.90" y="69.90" width="6.12" height="0.9" fill="#6a9955"/><rect x="25.58" y="69.90" width="2.22" height="0.9" fill="#6a9955"/><rect x="28.36" y="69.90" width="1.67" height="0.9" fill="#6a9955"/><rect x="30.58" y="69.90" width="2.78" height="0.9" fill="#6a9955"/><rect x="33.92" y="69.90" width="3.34" height="0.9" fill="#6a9955"/><rect x="37.81" y="69.90" width="2.78" height="0.9" fill="#6a9955"/><rect x="41.14" y="69.90" width="1.67" height="0.9" fill="#6a9955"/><rect x="43.37" y="69.90" width="1.11" height="0.9" fill="#6a9955"/><rect x="3.34" y="71.00" width="1.11" height="0.9" fill="#6a9955"/><rect x="5.00" y="71.00" width="3.34" height="0.9" fill="#6a9955"/><rect x="8.90" y="71.00" width="3.34" height="0.9" fill="#6a9955"/><rect x="12.79" y="71.00" width="1.67" height="0.9" fill="#6a9955"/><rect x="15.01" y="71.00" width="1.11" height="0.9" fill="#6a9955"/><rect x="16.68" y="71.00" width="3.89" height="0.9" fill="#6a9955"/><rect x="21.13" y="71.00" width="2.78" height="0.9" fill="#6a9955"/><rect x="24.46" y="71.00" width="3.34" height="0.9" fill="#6a9955"/><rect x="28.36" y="71.00" width="1.11" height="0.9" fill="#6a9955"/><rect x="30.02" y="71.00" width="3.89" height="0.9" fill="#6a9955"/><rect x="3.34" y="72.10" width="4.45" height="0.9" fill="#9cdcfe"/><rect x="7.78" y="72.10" width="1.67" height="0.9" fill="#d4d4d4"/><rect x="2.22" y="73.20" width="1.67" height="0.9" fill="#d4d4d4"/><rect x="1.11" y="74.30" width="0.56" height="0.9" fill="#d4d4d4"/><rect x="1.11" y="76.50" width="5.00" height="0.9" fill="#cccccc"/><rect x="1.11" y="77.60" width="3.34" height="0.9" fill="#4ec9b0"/><rect x="5.00" y="77.60" width="2.78" height="0.9" fill="#dcdcaa"/><rect x="7.78" y="77.60" width="0.56" height="0.9" fill="#d4d4d4"/><rect x="8.34" y="77.60" width="6.67" height="0.9" fill="#4ec9b0"/><rect x="15.57" y="77.60" width="3.89" height="0.9" fill="#9cdcfe"/><rect x="19.46" y="77.60" width="0.56" height="0.9" fill="#d4d4d4"/><rect x="20.57" y="77.60" width="0.56" height="0.9" fill="#d4d4d4"/><rect x="2.22" y="78.70" width="1.11" height="0.9" fill="#6a9955"/><rect x="3.89" y="78.70" width="2.22" height="0.9" fill="#6a9955"/><rect x="6.67" y="78.70" width="3.34" height="0.9" fill="#6a9955"/><rect x="10.56" y="78.70" width="1.11" height="0.9" fill="#6a9955"/><rect x="12.23" y="78.70" width="2.78" height="0.9" fill="#6a9955"/><rect x="15.57" y="78.70" width="2.78" height="0.9" fill="#6a9955"/><rect x="18.90" y="78.70" width="2.22" height="0.9" fill="#6a9955"/><rect x="21.68" y="78.70" width="4.45" height="0.9" fill="#6a9955"/><rect x="26.69" y="78.70" width="1.11" height="0.9" fill="#6a9955"/><rect x="28.36" y="78.70" width="3.89" height="0.9" fill="#6a9955"/><rect x="32.80" y="78.70" width="1.67" height="0.9" fill="#6a9955"/><rect x="35.03" y="78.70" width="4.45" height="0.9" fill="#6a9955"/><rect x="40.03" y="78.70" width="1.11" height="0.9" fill="#6a9955"/><rect x="41.70" y="78.70" width="2.22" height="0.9" fill="#6a9955"/><rect x="2.22" y="79.80" width="1.11" height="0.9" fill="#6a9955"/><rect x="3.89" y="79.80" width="1.11" height="0.9" fill="#6a9955"/><rect x="5.56" y="79.80" width="1.67" height="0.9" fill="#6a9955"/><rect x="7.78" y="79.80" width="9.45" height="0.9" fill="#6a9955"/><rect x="17.79" y="79.80" width="3.34" height="0.9" fill="#6a9955"/><rect x="21.68" y="79.80" width="3.34" height="0.9" fill="#6a9955"/><rect x="2.22" y="80.90" width="1.11" height="0.9" fill="#6a9955"/><rect x="2.22" y="82.00" width="1.11" height="0.9" fill="#6a9955"/><rect x="3.89" y="82.00" width="1.67" height="0.9" fill="#6a9955"/><rect x="6.12" y="82.00" width="3.89" height="0.9" fill="#6a9955"/><rect x="10.56" y="82.00" width="5.00" height="0.9" fill="#6a9955"/><rect x="16.12" y="82.00" width="1.67" height="0.9" fill="#6a9955"/><rect x="18.35" y="82.00" width="2.22" height="0.9" fill="#6a9955"/><rect x="21.13" y="82.00" width="5.00" height="0.9" fill="#6a9955"/><rect x="26.69" y="82.00" width="1.11" height="0.9" fill="#6a9955"/><rect x="28.36" y="82.00" width="2.22" height="0.9" fill="#6a9955"/><rect x="31.14" y="82.00" width="5.00" height="0.9" fill="#6a9955"/><rect x="36.70" y="82.00" width="2.78" height="0.9" fill="#6a9955"/><rect x="40.03" y="82.00" width="3.89" height="0.9" fill="#6a9955"/><rect x="2.22" y="83.10" width="1.11" height="0.9" fill="#6a9955"/><rect x="3.89" y="83.10" width="2.78" height="0.9" fill="#6a9955"/><rect x="7.23" y="83.10" width="1.11" height="0.9" fill="#6a9955"/><rect x="8.90" y="83.10" width="2.22" height="0.9" fill="#6a9955"/><rect x="11.68" y="83.10" width="1.67" height="0.9" fill="#6a9955"/><rect x="13.90" y="83.10" width="1.67" height="0.9" fill="#6a9955"/><rect x="16.12" y="83.10" width="2.22" height="0.9" fill="#6a9955"/><rect x="18.90" y="83.10" width="3.89" height="0.9" fill="#6a9955"/><rect x="23.35" y="83.10" width="4.45" height="0.9" fill="#6a9955"/><rect x="28.36" y="83.10" width="2.22" height="0.9" fill="#6a9955"/><rect x="31.14" y="83.10" width="2.78" height="0.9" fill="#6a9955"/><rect x="34.47" y="83.10" width="4.45" height="0.9" fill="#6a9955"/><rect x="39.48" y="83.10" width="3.34" height="0.9" fill="#6a9955"/><rect x="2.22" y="84.20" width="1.11" height="0.9" fill="#6a9955"/><rect x="3.89" y="84.20" width="2.22" height="0.9" fill="#6a9955"/><rect x="6.67" y="84.20" width="3.34" height="0.9" fill="#6a9955"/><rect x="10.56" y="84.20" width="1.11" height="0.9" fill="#6a9955"/><rect x="12.23" y="84.20" width="6.67" height="0.9" fill="#6a9955"/><rect x="19.46" y="84.20" width="3.34" height="0.9" fill="#6a9955"/><rect x="23.35" y="84.20" width="5.00" height="0.9" fill="#6a9955"/><rect x="28.91" y="84.20" width="1.11" height="0.9" fill="#6a9955"/><rect x="30.58" y="84.20" width="4.45" height="0.9" fill="#6a9955"/><rect x="2.22" y="85.30" width="3.34" height="0.9" fill="#c586c0"/><rect x="6.12" y="85.30" width="4.45" height="0.9" fill="#4ec9b0"/><rect x="10.56" y="85.30" width="0.56" height="0.9" fill="#d4d4d4"/><rect x="3.34" y="86.40" width="3.34" height="0.9" fill="#9cdcfe"/><rect x="6.67" y="86.40" width="0.56" height="0.9" fill="#d4d4d4"/><rect x="7.78" y="86.40" width="3.34" height="0.9" fill="#4ec9b0"/><rect x="11.12" y="86.40" width="0.56" height="0.9" fill="#d4d4d4"/><rect x="4.45" y="87.50" width="1.11" height="0.9" fill="#6a9955"/><rect x="6.12" y="87.50" width="1.67" height="0.9" fill="#6a9955"/><rect x="8.34" y="87.50" width="2.78" height="0.9" fill="#6a9955"/><rect x="11.68" y="87.50" width="1.67" height="0.9" fill="#6a9955"/><rect x="13.90" y="87.50" width="4.45" height="0.9" fill="#6a9955"/><rect x="18.90" y="87.50" width="1.67" height="0.9" fill="#6a9955"/><rect x="21.13" y="87.50" width="2.78" height="0.9" fill="#6a9955"/><rect x="24.46" y="87.50" width="2.22" height="0.9" fill="#6a9955"/><rect x="27.24" y="87.50" width="1.11" height="0.9" fill="#6a9955"/><rect x="28.91" y="87.50" width="0.56" height="0.9" fill="#6a9955"/><rect x="30.02" y="87.50" width="4.45" height="0.9" fill="#6a9955"/><rect x="35.03" y="87.50" width="2.78" height="0.9" fill="#6a9955"/><rect x="38.36" y="87.50" width="1.67" height="0.9" fill="#6a9955"/><rect x="4.45" y="88.60" width="1.11" height="0.9" fill="#6a9955"/><rect x="6.12" y="88.60" width="7.23" height="0.9" fill="#6a9955"/><rect x="13.90" y="88.60" width="5.00" height="0.9" fill="#6a9955"/><rect x="19.46" y="88.60" width="1.67" height="0.9" fill="#6a9955"/><rect x="21.68" y="88.60" width="3.89" height="0.9" fill="#6a9955"/><rect x="26.13" y="88.60" width="0.56" height="0.9" fill="#6a9955"/><rect x="27.24" y="88.60" width="1.67" height="0.9" fill="#6a9955"/><rect x="29.47" y="88.60" width="3.34" height="0.9" fill="#6a9955"/><rect x="33.36" y="88.60" width="1.11" height="0.9" fill="#6a9955"/><rect x="35.03" y="88.60" width="1.67" height="0.9" fill="#6a9955"/><rect x="37.25" y="88.60" width="1.67" height="0.9" fill="#6a9955"/><rect x="39.48" y="88.60" width="3.34" height="0.9" fill="#6a9955"/><rect x="4.45" y="89.70" width="1.11" height="0.9" fill="#6a9955"/><rect x="6.12" y="89.70" width="3.34" height="0.9" fill="#6a9955"/><rect x="10.01" y="89.70" width="2.78" height="0.9" fill="#6a9955"/><rect x="13.34" y="89.70" width="2.78" height="0.9" fill="#6a9955"/><rect x="16.68" y="89.70" width="1.67" height="0.9" fill="#6a9955"/><rect x="18.90" y="89.70" width="2.78" height="0.9" fill="#6a9955"/><rect x="22.24" y="89.70" width="3.34" height="0.9" fill="#6a9955"/><rect x="26.13" y="89.70" width="2.22" height="0.9" fill="#6a9955"/><rect x="28.91" y="89.70" width="1.67" height="0.9" fill="#6a9955"/><rect x="31.14" y="89.70" width="2.78" height="0.9" fill="#6a9955"/><rect x="4.45" y="90.80" width="8.34" height="0.9" fill="#9cdcfe"/><rect x="12.79" y="90.80" width="0.56" height="0.9" fill="#d4d4d4"/><rect x="13.90" y="90.80" width="2.78" height="0.9" fill="#4ec9b0"/><rect x="16.68" y="90.80" width="0.56" height="0.9" fill="#d4d4d4"/><rect x="17.24" y="90.80" width="1.11" height="0.9" fill="#dcdcaa"/><rect x="18.35" y="90.80" width="0.56" height="0.9" fill="#d4d4d4"/><rect x="18.90" y="90.80" width="3.89" height="0.9" fill="#9cdcfe"/><rect x="22.80" y="90.80" width="1.11" height="0.9" fill="#d4d4d4"/><rect x="23.91" y="90.80" width="6.12" height="0.9" fill="#9cdcfe"/><rect x="30.02" y="90.80" width="0.56" height="0.9" fill="#d4d4d4"/><rect x="30.58" y="90.80" width="7.78" height="0.9" fill="#9cdcfe"/><rect x="38.36" y="90.80" width="0.56" height="0.9" fill="#d4d4d4"/><rect x="4.45" y="91.90" width="1.11" height="0.9" fill="#6a9955"/><rect x="6.12" y="91.90" width="2.22" height="0.9" fill="#6a9955"/><rect x="8.90" y="91.90" width="1.11" height="0.9" fill="#6a9955"/><rect x="10.56" y="91.90" width="2.22" height="0.9" fill="#6a9955"/><rect x="13.34" y="91.90" width="1.67" height="0.9" fill="#6a9955"/><rect x="15.57" y="91.90" width="2.78" height="0.9" fill="#6a9955"/><rect x="18.90" y="91.90" width="2.22" height="0.9" fill="#6a9955"/><rect x="21.68" y="91.90" width="1.67" height="0.9" fill="#6a9955"/><rect x="23.91" y="91.90" width="5.56" height="0.9" fill="#6a9955"/><rect x="30.02" y="91.90" width="3.34" height="0.9" fill="#6a9955"/><rect x="33.92" y="91.90" width="2.22" height="0.9" fill="#6a9955"/><rect x="36.70" y="91.90" width="1.67" height="0.9" fill="#6a9955"/><rect x="38.92" y="91.90" width="3.89" height="0.9" fill="#6a9955"/><rect x="43.37" y="91.90" width="1.11" height="0.9" fill="#6a9955"/><rect x="4.45" y="93.00" width="1.11" height="0.9" fill="#6a9955"/><rect x="6.12" y="93.00" width="1.67" height="0.9" fill="#6a9955"/><rect x="8.34" y="93.00" width="5.00" height="0.9" fill="#6a9955"/><rect x="13.90" y="93.00" width="3.89" height="0.9" fill="#6a9955"/><rect x="18.35" y="93.00" width="1.67" height="0.9" fill="#6a9955"/><rect x="20.57" y="93.00" width="1.67" height="0.9" fill="#6a9955"/><rect x="22.80" y="93.00" width="1.11" height="0.9" fill="#6a9955"/><rect x="24.46" y="93.00" width="1.11" height="0.9" fill="#6a9955"/><rect x="26.13" y="93.00" width="1.67" height="0.9" fill="#6a9955"/><rect x="28.36" y="93.00" width="1.67" height="0.9" fill="#6a9955"/><rect x="30.58" y="93.00" width="3.34" height="0.9" fill="#6a9955"/><rect x="34.47" y="93.00" width="3.34" height="0.9" fill="#6a9955"/><rect x="4.45" y="94.10" width="2.78" height="0.9" fill="#9cdcfe"/><rect x="7.23" y="94.10" width="0.56" height="0.9" fill="#d4d4d4"/><rect x="8.34" y="94.10" width="2.22" height="0.9" fill="#4ec9b0"/><rect x="10.56" y="94.10" width="0.56" height="0.9" fill="#d4d4d4"/><rect x="11.12" y="94.10" width="3.34" height="0.9" fill="#9cdcfe"/><rect x="14.46" y="94.10" width="0.56" height="0.9" fill="#d4d4d4"/><rect x="15.01" y="94.10" width="2.78" height="0.9" fill="#9cdcfe"/><rect x="17.79" y="94.10" width="1.11" height="0.9" fill="#d4d4d4"/><rect x="3.34" y="95.20" width="1.11" height="0.9" fill="#d4d4d4"/><rect x="3.34" y="96.30" width="2.22" height="0.9" fill="#9cdcfe"/><rect x="5.56" y="96.30" width="0.56" height="0.9" fill="#d4d4d4"/><rect x="6.67" y="96.30" width="3.34" height="0.9" fill="#4ec9b0"/><rect x="10.01" y="96.30" width="0.56" height="0.9" fill="#d4d4d4"/><rect x="4.45" y="97.40" width="1.11" height="0.9" fill="#6a9955"/><rect x="6.12" y="97.40" width="3.34" height="0.9" fill="#6a9955"/><rect x="10.01" y="97.40" width="1.11" height="0.9" fill="#6a9955"/><rect x="11.68" y="97.40" width="0.56" height="0.9" fill="#6a9955"/><rect x="12.79" y="97.40" width="3.34" height="0.9" fill="#6a9955"/><rect x="16.68" y="97.40" width="3.89" height="0.9" fill="#6a9955"/><rect x="21.13" y="97.40" width="1.11" height="0.9" fill="#6a9955"/><rect x="22.80" y="97.40" width="2.78" height="0.9" fill="#6a9955"/><rect x="26.13" y="97.40" width="0.56" height="0.9" fill="#6a9955"/><rect x="27.24" y="97.40" width="3.34" height="0.9" fill="#6a9955"/><rect x="31.14" y="97.40" width="2.78" height="0.9" fill="#6a9955"/><rect x="34.47" y="97.40" width="1.67" height="0.9" fill="#6a9955"/><rect x="36.70" y="97.40" width="5.00" height="0.9" fill="#6a9955"/><rect x="42.26" y="97.40" width="1.11" height="0.9" fill="#6a9955"/><rect x="4.45" y="98.50" width="1.11" height="0.9" fill="#6a9955"/><rect x="6.12" y="98.50" width="1.11" height="0.9" fill="#6a9955"/><rect x="7.78" y="98.50" width="1.67" height="0.9" fill="#6a9955"/><rect x="10.01" y="98.50" width="3.34" height="0.9" fill="#6a9955"/><rect x="13.90" y="98.50" width="1.11" height="0.9" fill="#6a9955"/><rect x="15.57" y="98.50" width="1.67" height="0.9" fill="#6a9955"/><rect x="17.79" y="98.50" width="3.89" height="0.9" fill="#6a9955"/><rect x="4.45" y="99.60" width="2.78" height="0.9" fill="#9cdcfe"/><rect x="7.23" y="99.60" width="0.56" height="0.9" fill="#d4d4d4"/><rect x="8.34" y="99.60" width="3.34" height="0.9" fill="#4ec9b0"/><rect x="11.68" y="99.60" width="0.56" height="0.9" fill="#d4d4d4"/><rect x="5.56" y="100.70" width="1.11" height="0.9" fill="#6a9955"/><rect x="7.23" y="100.70" width="3.34" height="0.9" fill="#6a9955"/><rect x="11.12" y="100.70" width="1.11" height="0.9" fill="#6a9955"/><rect x="12.79" y="100.70" width="2.22" height="0.9" fill="#6a9955"/><rect x="15.57" y="100.70" width="0.56" height="0.9" fill="#6a9955"/><rect x="16.68" y="100.70" width="3.34" height="0.9" fill="#6a9955"/><rect x="20.57" y="100.70" width="3.89" height="0.9" fill="#6a9955"/><rect x="25.02" y="100.70" width="1.11" height="0.9" fill="#6a9955"/><rect x="26.69" y="100.70" width="2.78" height="0.9" fill="#6a9955"/><rect x="30.02" y="100.70" width="0.56" height="0.9" fill="#6a9955"/><rect x="31.14" y="100.70" width="2.22" height="0.9" fill="#6a9955"/><rect x="33.92" y="100.70" width="1.11" height="0.9" fill="#6a9955"/><rect x="35.58" y="100.70" width="4.45" height="0.9" fill="#6a9955"/><rect x="40.59" y="100.70" width="1.67" height="0.9" fill="#6a9955"/><rect x="5.56" y="101.80" width="1.11" height="0.9" fill="#6a9955"/><rect x="7.23" y="101.80" width="4.45" height="0.9" fill="#6a9955"/><rect x="12.23" y="101.80" width="2.22" height="0.9" fill="#6a9955"/><rect x="15.01" y="101.80" width="6.12" height="0.9" fill="#6a9955"/><rect x="21.68" y="101.80" width="1.11" height="0.9" fill="#6a9955"/><rect x="23.35" y="101.80" width="4.45" height="0.9" fill="#6a9955"/><rect x="28.36" y="101.80" width="1.11" height="0.9" fill="#6a9955"/><rect x="30.02" y="101.80" width="2.78" height="0.9" fill="#6a9955"/><rect x="33.36" y="101.80" width="3.34" height="0.9" fill="#6a9955"/><rect x="37.25" y="101.80" width="1.11" height="0.9" fill="#6a9955"/><rect x="38.92" y="101.80" width="1.67" height="0.9" fill="#6a9955"/><rect x="41.14" y="101.80" width="1.67" height="0.9" fill="#6a9955"/><rect x="5.56" y="102.90" width="1.11" height="0.9" fill="#6a9955"/><rect x="7.23" y="102.90" width="4.45" height="0.9" fill="#6a9955"/><rect x="12.23" y="102.90" width="7.23" height="0.9" fill="#6a9955"/><rect x="20.02" y="102.90" width="1.67" height="0.9" fill="#6a9955"/><rect x="22.24" y="102.90" width="2.78" height="0.9" fill="#6a9955"/><rect x="25.58" y="102.90" width="1.11" height="0.9" fill="#6a9955"/><rect x="27.24" y="102.90" width="1.11" height="0.9" fill="#6a9955"/><rect x="28.91" y="102.90" width="1.11" height="0.9" fill="#6a9955"/><rect x="30.58" y="102.90" width="2.22" height="0.9" fill="#6a9955"/><rect x="33.36" y="102.90" width="1.11" height="0.9" fill="#6a9955"/><rect x="35.03" y="102.90" width="1.67" height="0.9" fill="#6a9955"/><rect x="37.25" y="102.90" width="3.89" height="0.9" fill="#6a9955"/><rect x="5.56" y="104.00" width="1.11" height="0.9" fill="#6a9955"/><rect x="5.56" y="105.10" width="1.11" height="0.9" fill="#6a9955"/><rect x="7.23" y="105.10" width="3.34" height="0.9" fill="#6a9955"/><rect x="11.12" y="105.10" width="1.67" height="0.9" fill="#6a9955"/><rect x="13.34" y="105.10" width="3.89" height="0.9" fill="#6a9955"/><rect x="17.79" y="105.10" width="5.56" height="0.9" fill="#6a9955"/><rect x="23.91" y="105.10" width="1.11" height="0.9" fill="#6a9955"/><rect x="25.58" y="105.10" width="3.89" height="0.9" fill="#6a9955"/><rect x="30.02" y="105.10" width="1.67" height="0.9" fill="#6a9955"/><rect x="32.25" y="105.10" width="1.11" height="0.9" fill="#6a9955"/><rect x="33.92" y="105.10" width="2.78" height="0.9" fill="#6a9955"/><rect x="37.25" y="105.10" width="3.34" height="0.9" fill="#6a9955"/><rect x="41.14" y="105.10" width="1.67" height="0.9" fill="#6a9955"/><rect x="5.56" y="106.20" width="1.11" height="0.9" fill="#6a9955"/><rect x="7.23" y="106.20" width="1.67" height="0.9" fill="#6a9955"/><rect x="9.45" y="106.20" width="1.11" height="0.9" fill="#6a9955"/><rect x="11.12" y="106.20" width="5.00" height="0.9" fill="#6a9955"/><rect x="16.68" y="106.20" width="1.67" height="0.9" fill="#6a9955"/><rect x="18.90" y="106.20" width="5.00" height="0.9" fill="#6a9955"/><rect x="24.46" y="106.20" width="2.22" height="0.9" fill="#6a9955"/><rect x="27.24" y="106.20" width="1.11" height="0.9" fill="#6a9955"/><rect x="28.91" y="106.20" width="1.67" height="0.9" fill="#6a9955"/><rect x="31.14" y="106.20" width="9.45" height="0.9" fill="#6a9955"/><rect x="41.14" y="106.20" width="1.11" height="0.9" fill="#6a9955"/><rect x="5.56" y="107.30" width="1.11" height="0.9" fill="#6a9955"/><rect x="7.23" y="107.30" width="3.34" height="0.9" fill="#6a9955"/><rect x="11.12" y="107.30" width="1.67" height="0.9" fill="#6a9955"/><rect x="13.34" y="107.30" width="4.45" height="0.9" fill="#6a9955"/><rect x="18.35" y="107.30" width="6.12" height="0.9" fill="#6a9955"/><rect x="25.02" y="107.30" width="1.67" height="0.9" fill="#6a9955"/><rect x="27.24" y="107.30" width="2.22" height="0.9" fill="#6a9955"/><rect x="30.02" y="107.30" width="2.22" height="0.9" fill="#6a9955"/><rect x="32.80" y="107.30" width="2.22" height="0.9" fill="#6a9955"/><rect x="35.58" y="107.30" width="1.11" height="0.9" fill="#6a9955"/><rect x="37.25" y="107.30" width="1.67" height="0.9" fill="#6a9955"/><rect x="39.48" y="107.30" width="4.45" height="0.9" fill="#6a9955"/><rect x="5.56" y="108.40" width="1.11" height="0.9" fill="#6a9955"/><rect x="7.23" y="108.40" width="2.22" height="0.9" fill="#6a9955"/><rect x="10.01" y="108.40" width="3.89" height="0.9" fill="#6a9955"/><rect x="14.46" y="108.40" width="3.89" height="0.9" fill="#6a9955"/><rect x="18.90" y="108.40" width="1.67" height="0.9" fill="#6a9955"/><rect x="21.13" y="108.40" width="4.45" height="0.9" fill="#6a9955"/><rect x="26.13" y="108.40" width="2.22" height="0.9" fill="#6a9955"/><rect x="28.91" y="108.40" width="2.78" height="0.9" fill="#6a9955"/><rect x="32.25" y="108.40" width="2.22" height="0.9" fill="#6a9955"/><rect x="35.03" y="108.40" width="2.78" height="0.9" fill="#6a9955"/><rect x="38.36" y="108.40" width="1.11" height="0.9" fill="#6a9955"/><rect x="5.56" y="109.50" width="1.11" height="0.9" fill="#6a9955"/><rect x="7.23" y="109.50" width="6.67" height="0.9" fill="#6a9955"/><rect x="5.56" y="110.60" width="1.11" height="0.9" fill="#6a9955"/><rect x="5.56" y="111.70" width="1.11" height="0.9" fill="#6a9955"/><rect x="7.23" y="111.70" width="1.67" height="0.9" fill="#6a9955"/><rect x="9.45" y="111.70" width="2.78" height="0.9" fill="#6a9955"/><rect x="12.79" y="111.70" width="3.34" height="0.9" fill="#6a9955"/><rect x="16.68" y="111.70" width="3.34" height="0.9" fill="#6a9955"/><rect x="20.57" y="111.70" width="5.00" height="0.9" fill="#6a9955"/><rect x="26.13" y="111.70" width="3.89" height="0.9" fill="#6a9955"/><rect x="30.58" y="111.70" width="1.67" height="0.9" fill="#6a9955"/><rect x="32.80" y="111.70" width="3.89" height="0.9" fill="#6a9955"/><rect x="37.25" y="111.70" width="2.78" height="0.9" fill="#6a9955"/><rect x="40.59" y="111.70" width="3.34" height="0.9" fill="#6a9955"/><rect x="5.56" y="112.80" width="1.11" height="0.9" fill="#6a9955"/><rect x="7.23" y="112.80" width="3.34" height="0.9" fill="#6a9955"/><rect x="11.12" y="112.80" width="1.11" height="0.9" fill="#6a9955"/><rect x="12.79" y="112.80" width="1.67" height="0.9" fill="#6a9955"/><rect x="15.01" y="112.80" width="2.22" height="0.9" fill="#6a9955"/><rect x="17.79" y="112.80" width="1.11" height="0.9" fill="#6a9955"/><rect x="19.46" y="112.80" width="2.78" height="0.9" fill="#6a9955"/><rect x="22.80" y="112.80" width="1.67" height="0.9" fill="#6a9955"/><rect x="25.02" y="112.80" width="1.11" height="0.9" fill="#6a9955"/><rect x="26.69" y="112.80" width="1.67" height="0.9" fill="#6a9955"/><rect x="28.91" y="112.80" width="5.00" height="0.9" fill="#6a9955"/><rect x="34.47" y="112.80" width="1.11" height="0.9" fill="#6a9955"/><rect x="36.14" y="112.80" width="1.67" height="0.9" fill="#6a9955"/><rect x="38.36" y="112.80" width="1.67" height="0.9" fill="#6a9955"/><rect x="5.56" y="113.90" width="1.11" height="0.9" fill="#6a9955"/><rect x="7.23" y="113.90" width="5.00" height="0.9" fill="#6a9955"/><rect x="12.79" y="113.90" width="1.67" height="0.9" fill="#6a9955"/><rect x="15.01" y="113.90" width="2.22" height="0.9" fill="#6a9955"/><rect x="17.79" y="113.90" width="3.89" height="0.9" fill="#6a9955"/><rect x="5.56" y="115.00" width="9.45" height="0.9" fill="#9cdcfe"/><rect x="15.01" y="115.00" width="0.56" height="0.9" fill="#d4d4d4"/><rect x="16.12" y="115.00" width="9.45" height="0.9" fill="#4ec9b0"/><rect x="25.58" y="115.00" width="0.56" height="0.9" fill="#d4d4d4"/><rect x="26.13" y="115.00" width="3.34" height="0.9" fill="#9cdcfe"/><rect x="29.47" y="115.00" width="0.56" height="0.9" fill="#d4d4d4"/><rect x="5.56" y="116.10" width="4.45" height="0.9" fill="#9cdcfe"/><rect x="10.01" y="116.10" width="0.56" height="0.9" fill="#d4d4d4"/><rect x="11.12" y="116.10" width="0.56" height="0.9" fill="#d4d4d4"/><rect x="11.68" y="116.10" width="3.34" height="0.9" fill="#4ec9b0"/><rect x="15.01" y="116.10" width="1.11" height="0.9" fill="#d4d4d4"/><rect x="6.67" y="117.20" width="2.78" height="0.9" fill="#569cd6"/><rect x="10.01" y="117.20" width="2.22" height="0.9" fill="#4ec9b0"/><rect x="12.23" y="117.20" width="0.56" height="0.9" fill="#d4d4d4"/><rect x="7.78" y="118.30" width="2.22" height="0.9" fill="#ce9178"/><rect x="10.56" y="118.30" width="2.22" height="0.9" fill="#ce9178"/><rect x="13.34" y="118.30" width="3.34" height="0.9" fill="#ce9178"/><rect x="17.24" y="118.30" width="1.67" height="0.9" fill="#ce9178"/><rect x="19.46" y="118.30" width="3.34" height="0.9" fill="#ce9178"/><rect x="23.35" y="118.30" width="2.22" height="0.9" fill="#ce9178"/><rect x="26.13" y="118.30" width="2.22" height="0.9" fill="#ce9178"/><rect x="28.91" y="118.30" width="3.89" height="0.9" fill="#ce9178"/><rect x="32.80" y="118.30" width="0.56" height="0.9" fill="#d4d4d4"/><rect x="6.67" y="119.40" width="1.11" height="0.9" fill="#d4d4d4"/><rect x="6.67" y="120.50" width="2.22" height="0.9" fill="#4ec9b0"/><rect x="8.90" y="120.50" width="0.56" height="0.9" fill="#d4d4d4"/><rect x="7.78" y="121.60" width="6.12" height="0.9" fill="#ce9178"/><rect x="13.90" y="121.60" width="0.56" height="0.9" fill="#d4d4d4"/><rect x="7.78" y="122.70" width="2.78" height="0.9" fill="#9cdcfe"/><rect x="10.56" y="122.70" width="0.56" height="0.9" fill="#d4d4d4"/><rect x="11.68" y="122.70" width="2.78" height="0.9" fill="#4ec9b0"/><rect x="14.46" y="122.70" width="0.56" height="0.9" fill="#d4d4d4"/><rect x="15.01" y="122.70" width="1.11" height="0.9" fill="#dcdcaa"/><rect x="16.12" y="122.70" width="0.56" height="0.9" fill="#d4d4d4"/><rect x="16.68" y="122.70" width="3.89" height="0.9" fill="#9cdcfe"/><rect x="20.57" y="122.70" width="1.11" height="0.9" fill="#d4d4d4"/><rect x="21.68" y="122.70" width="5.00" height="0.9" fill="#9cdcfe"/><rect x="26.69" y="122.70" width="0.56" height="0.9" fill="#d4d4d4"/><rect x="27.24" y="122.70" width="7.78" height="0.9" fill="#9cdcfe"/><rect x="35.03" y="122.70" width="0.56" height="0.9" fill="#d4d4d4"/><rect x="6.67" y="123.80" width="1.11" height="0.9" fill="#d4d4d4"/><rect x="5.56" y="124.90" width="1.11" height="0.9" fill="#d4d4d4"/><rect x="4.45" y="126.00" width="1.11" height="0.9" fill="#d4d4d4"/><rect x="3.34" y="127.10" width="1.11" height="0.9" fill="#d4d4d4"/><rect x="3.34" y="128.20" width="11.12" height="0.9" fill="#9cdcfe"/><rect x="14.46" y="128.20" width="0.56" height="0.9" fill="#d4d4d4"/><rect x="15.57" y="128.20" width="11.12" height="0.9" fill="#4ec9b0"/><rect x="26.69" y="128.20" width="0.56" height="0.9" fill="#d4d4d4"/><rect x="4.45" y="129.30" width="5.00" height="0.9" fill="#9cdcfe"/><rect x="9.45" y="129.30" width="0.56" height="0.9" fill="#d4d4d4"/><rect x="10.56" y="129.30" width="9.45" height="0.9" fill="#9cdcfe"/><rect x="20.02" y="129.30" width="0.56" height="0.9" fill="#d4d4d4"/><rect x="4.45" y="130.40" width="3.89" height="0.9" fill="#9cdcfe"/><rect x="8.34" y="130.40" width="0.56" height="0.9" fill="#d4d4d4"/><rect x="9.45" y="130.40" width="6.12" height="0.9" fill="#ce9178"/><rect x="15.57" y="130.40" width="0.56" height="0.9" fill="#d4d4d4"/><rect x="4.45" y="131.50" width="2.78" height="0.9" fill="#9cdcfe"/><rect x="7.23" y="131.50" width="0.56" height="0.9" fill="#d4d4d4"/><rect x="8.34" y="131.50" width="2.78" height="0.9" fill="#569cd6"/><rect x="11.68" y="131.50" width="2.22" height="0.9" fill="#4ec9b0"/><rect x="13.90" y="131.50" width="0.56" height="0.9" fill="#d4d4d4"/><rect x="14.46" y="131.50" width="2.78" height="0.9" fill="#4ec9b0"/><rect x="17.24" y="131.50" width="0.56" height="0.9" fill="#d4d4d4"/><rect x="17.79" y="131.50" width="1.67" height="0.9" fill="#9cdcfe"/><rect x="19.46" y="131.50" width="1.11" height="0.9" fill="#d4d4d4"/><rect x="3.34" y="132.60" width="1.11" height="0.9" fill="#d4d4d4"/><rect x="2.22" y="133.70" width="1.11" height="0.9" fill="#d4d4d4"/><rect x="1.11" y="134.80" width="0.56" height="0.9" fill="#d4d4d4"/><rect x="0.00" y="135.90" width="0.56" height="0.9" fill="#d4d4d4"/></svg>
<div class="a" style="left:810.3px;top:447.8px;font-family:'Liberation Sans',sans-serif;font-size:50px;line-height:56px;color:#ea4a2b;transform:scale(1.06,1.045);transform-origin:0 0">5</div>
<svg class="a" style="left:829.00px;top:500.00px;" width="34" height="86" viewBox="0 0 34 86" fill="none" stroke="#cccccc" stroke-width="1" stroke-linecap="round" stroke-linejoin="round"><path d="M6.3 6 L25.5 73" stroke="#ea4a2b" stroke-width="1.9"/><path d="M22.3 72.3 L27 80.5 L28.6 71.2 Z" fill="#ea4a2b" stroke="#ea4a2b" stroke-width="1"/></svg>
</div>
<div id="winb"></div>
</body></html>
